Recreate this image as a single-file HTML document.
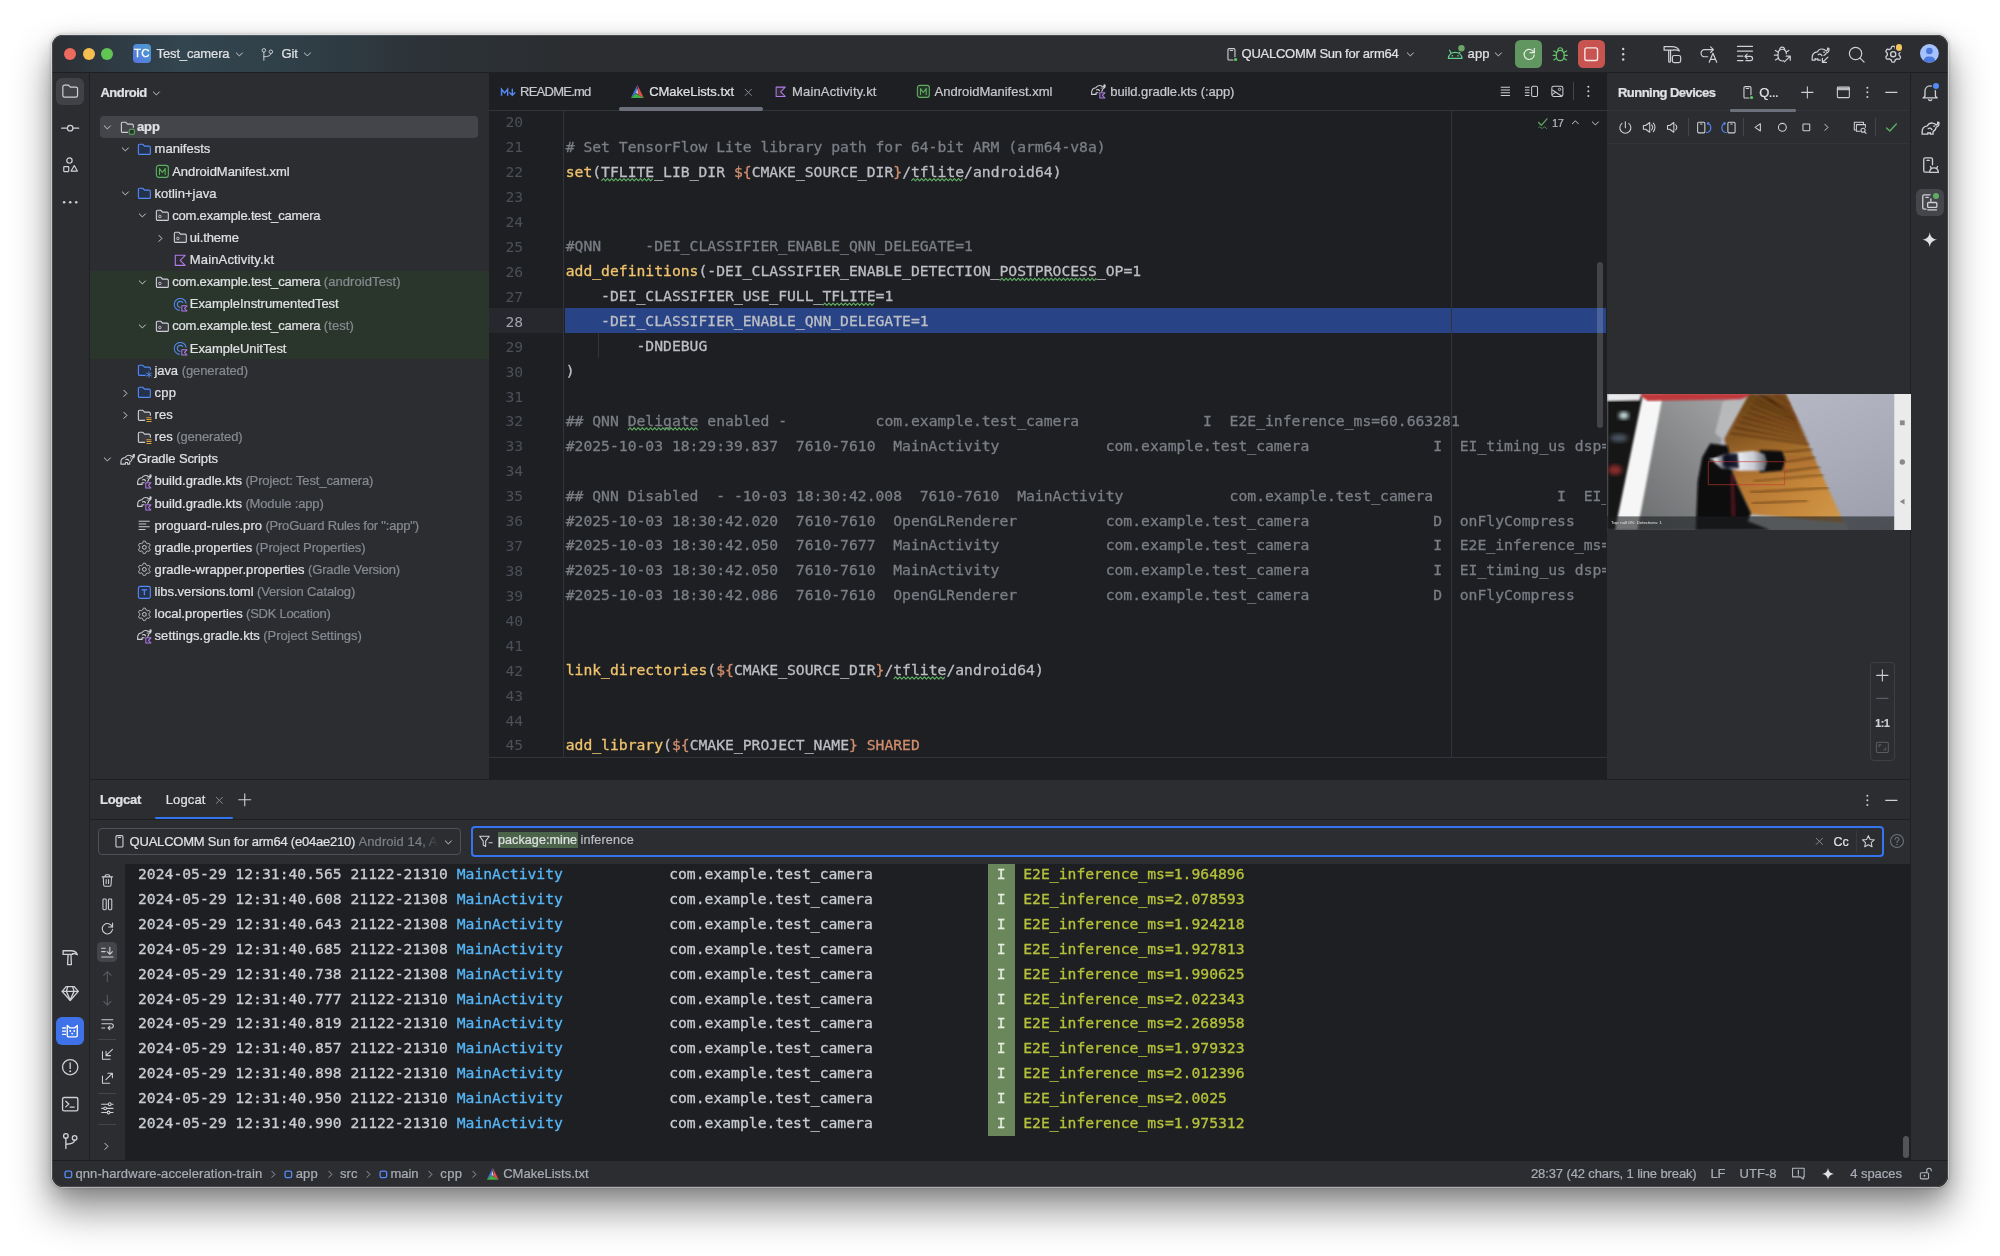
<!DOCTYPE html><html lang="en"><head><meta charset="utf-8"><title>Test_camera – CMakeLists.txt</title><style>
*{box-sizing:border-box;margin:0;padding:0}
html,body{width:2000px;height:1256px;background:#fff;overflow:hidden}
body{position:relative;font-family:"Liberation Sans", "DejaVu Sans", sans-serif;font-size:13px;color:#dfe1e5;-webkit-font-smoothing:antialiased}
#win{will-change:transform;position:absolute;left:52px;top:35px;width:1896px;height:1152px;border-radius:11px;background:#2b2d30;overflow:hidden}
#shadow{position:absolute;left:52px;top:35px;width:1896px;height:1152px;border-radius:11px;box-shadow:0 0 0 0.8px rgba(255,255,255,.55),0 0 3px 0.6px rgba(0,0,0,.22),0 22px 38px 2px rgba(0,0,0,.42),0 6px 18px rgba(0,0,0,.16)}
#rim{position:absolute;left:0;top:0;right:0;bottom:0;border-radius:11px;border:1px solid rgba(255,255,255,.13);pointer-events:none;z-index:50}
.a{position:absolute}
.t{-webkit-text-stroke:0.22px currentColor;position:absolute;white-space:pre;line-height:20px;height:20px;letter-spacing:-0.1px}
.b{font-weight:bold}
.g{color:#868a91}
.m{-webkit-text-stroke:0.3px currentColor;font-family:"DejaVu Sans Mono", "Liberation Mono", monospace;font-size:14.71px;letter-spacing:0;white-space:pre;position:absolute;line-height:25px;height:25px}
.ln{font-family:"DejaVu Sans Mono", "Liberation Mono", monospace;font-size:14.71px;position:absolute;color:#4b5059;text-align:right;width:40px;line-height:25px;height:25px}
svg{position:absolute;overflow:visible}

</style></head><body>
<div id="shadow"></div><div id="win">
<div class="a" style="left:0.00px;top:0.00px;width:1896.00px;height:37.00px;background:#2b2d30;background:linear-gradient(90deg,#2b2f33 0px,#2e3a44 60px,#33454f 130px,#304049 230px,#2c3237 380px,#2b2d30 520px,#2b2d30 100%);"></div>
<div class="a" style="left:0.00px;top:37.00px;width:1896.00px;height:1.00px;background:#1e1f22;"></div>
<div class="a" style="left:0.00px;top:38.00px;width:37.00px;height:1087.00px;background:#2b2d30;"></div>
<div class="a" style="left:37.00px;top:38.00px;width:1.00px;height:1087.00px;background:#1e1f22;"></div>
<div class="a" style="left:38.00px;top:38.00px;width:399.00px;height:706.00px;background:#2b2d30;"></div>
<div class="a" style="left:437.00px;top:38.00px;width:1118.00px;height:707.00px;background:#1e1f22;"></div>
<div class="a" style="left:1555.00px;top:38.00px;width:303.00px;height:707.00px;background:#2b2d30;"></div>
<div class="a" style="left:1858.00px;top:38.00px;width:1.00px;height:1087.00px;background:#1e1f22;"></div>
<div class="a" style="left:1859.00px;top:38.00px;width:37.00px;height:1087.00px;background:#2b2d30;"></div>
<div class="a" style="left:38.00px;top:744.00px;width:1820.00px;height:1.00px;background:#1e1f22;"></div>
<div class="a" style="left:38.00px;top:745.00px;width:1820.00px;height:380.00px;background:#2b2d30;"></div>
<div class="a" style="left:72.60px;top:829.00px;width:1785.40px;height:296.00px;background:#1e1f22;"></div>
<div class="a" style="left:0.00px;top:1125.00px;width:1896.00px;height:1.00px;background:#1e1f22;"></div>
<div class="a" style="left:0.00px;top:1126.00px;width:1896.00px;height:26.00px;background:#2b2d30;"></div>
<div class="a" style="left:12.20px;top:12.70px;width:12px;height:12px;border-radius:6px;background:#ed6a5e"></div>
<div class="a" style="left:30.60px;top:12.70px;width:12px;height:12px;border-radius:6px;background:#f4bf4f"></div>
<div class="a" style="left:49.00px;top:12.70px;width:12px;height:12px;border-radius:6px;background:#61c554"></div>
<div class="a" style="left:80.70px;top:9.40px;width:18.6px;height:18.6px;border-radius:4px;background:linear-gradient(45deg,#5873e0,#4f8ed6 60%,#4f9ad0);color:#fff;font-weight:normal;font-size:11.5px;line-height:18.8px;text-align:center;letter-spacing:0.2px;-webkit-text-stroke:0.3px #fff">TC</div>
<div class="t " style="left:104.60px;top:9.00px;font-size:13px;letter-spacing:-0.147px;">Test_camera</div>
<svg style="left:179.64px;top:12.14px" width="14.72" height="14.72" viewBox="0 0 16 16" fill="none" stroke-width="1.2"><path d="M4.7 6.4 8 9.7l3.3-3.3" stroke="#ced0d6" stroke-linecap="round" stroke-linejoin="round" stroke-width="1.05"/></svg>
<div class="t " style="left:229.60px;top:9.00px;font-size:13px;letter-spacing:-0.175px;">Git</div>
<svg style="left:247.64px;top:12.14px" width="14.72" height="14.72" viewBox="0 0 16 16" fill="none" stroke-width="1.2"><path d="M4.7 6.4 8 9.7l3.3-3.3" stroke="#ced0d6" stroke-linecap="round" stroke-linejoin="round" stroke-width="1.05"/></svg>
<div class="t " style="left:1189.60px;top:9.00px;font-size:13px;letter-spacing:-0.261px;">QUALCOMM Sun for arm64</div>
<svg style="left:1350.64px;top:12.14px" width="14.72" height="14.72" viewBox="0 0 16 16" fill="none" stroke-width="1.2"><path d="M4.7 6.4 8 9.7l3.3-3.3" stroke="#ced0d6" stroke-linecap="round" stroke-linejoin="round" stroke-width="1.05"/></svg>
<div class="t " style="left:1415.50px;top:9.00px;font-size:13px;letter-spacing:0.166px;">app</div>
<svg style="left:1438.94px;top:12.14px" width="14.72" height="14.72" viewBox="0 0 16 16" fill="none" stroke-width="1.2"><path d="M4.7 6.4 8 9.7l3.3-3.3" stroke="#ced0d6" stroke-linecap="round" stroke-linejoin="round" stroke-width="1.05"/></svg>
<div class="a" style="left:1463.00px;top:4.90px;width:27.30px;height:27.80px;background:#629660;border-radius:5.5px"></div>
<div class="a" style="left:1525.70px;top:4.90px;width:27.30px;height:27.80px;background:#c75450;border-radius:5.5px"></div>
<svg style="left:207.94px;top:11.64px" width="14.72" height="14.72" viewBox="0 0 16 16" fill="none" stroke-width="1.2"><circle cx="4.200" cy="3.600" r="1.900" stroke="#ced0d6" stroke-width="1.050"/><circle cx="11.800" cy="5.200" r="1.900" stroke="#ced0d6" stroke-width="1.050"/><path d="M4.200 5.500V14.500M11.800 7.100C11.800 9.700 9 10.300 4.200 10.600" stroke="#ced0d6" stroke-width="1.050" stroke-linecap="round"/></svg>
<svg style="left:1171.94px;top:11.64px" width="14.72" height="14.72" viewBox="0 0 16 16" fill="none" stroke-width="1.2"><rect x="4.3" y="1.8" width="7.6" height="12.4" rx="1.2" stroke="#ced0d6"/><path d="M6.8 3.8h2.6" stroke="#ced0d6" stroke-linecap="round"/><circle cx="12.6" cy="13.6" r="2.6" fill="#2b2d30"/><circle cx="12.6" cy="13.6" r="1.7" fill="#5fcf5f"/></svg>
<svg style="left:1394.10px;top:9.80px" width="18.40" height="18.40" viewBox="0 0 20 20" fill="none" stroke-width="1.2"><path d="M2.6 14.6C2.9 10.6 6 8 10 8s7.1 2.6 7.4 6.6Z" stroke="#63cf8c" stroke-width="1.4" stroke-linejoin="round"/><path d="M5.6 8.8 3.8 5.7M14.4 8.8 16.2 5.7" stroke="#63cf8c" stroke-width="1.3" stroke-linecap="round"/><circle cx="6.9" cy="11.8" r=".9" fill="#63cf8c"/><circle cx="13.1" cy="11.8" r=".9" fill="#63cf8c"/><circle cx="16.8" cy="3.6" r="4.4" fill="#2b2d30"/><circle cx="16.8" cy="3.6" r="3.5" fill="#6aa667"/></svg>
<svg style="left:1467.50px;top:9.80px" width="18.40" height="18.40" viewBox="0 0 20 20" fill="none" stroke-width="1.2"><path d="M15.2 8.4A5.5 5.5 0 1 0 15.5 10.6" stroke="#e6efe4" stroke-width="1.3" stroke-linecap="round"/><path d="M15.6 3.6V8.3H10.9" stroke="#e6efe4" stroke-width="1.3" stroke-linecap="round" stroke-linejoin="round"/></svg>
<svg style="left:1498.80px;top:9.60px" width="18.40" height="18.40" viewBox="0 0 20 20" fill="none" stroke-width="1.2"><path d="M10 5.8c2.6 0 4.3 2.2 4.3 5.6S12.6 17 10 17s-4.3-2.2-4.3-5.6S7.400 5.800 10 5.800Z" stroke="#67c36c" stroke-width="1.3"/><path d="M7.300 6.300C7.300 4.300 8.400 3 10 3s2.700 1.300 2.700 3.300" stroke="#67c36c" stroke-width="1.300"/><path d="M5.700 11.200H2.200M14.300 11.200H17.800M6 8.200 3.100 6.400M14 8.200 16.900 6.400M6.100 14.300 3.100 16.300M13.900 14.300 16.900 16.300" stroke="#67c36c" stroke-width="1.300" stroke-linecap="round"/></svg>
<svg style="left:1530.10px;top:9.80px" width="18.40" height="18.40" viewBox="0 0 20 20" fill="none" stroke-width="1.2"><rect x="3.1" y="3.1" width="13.8" height="13.8" rx="2" stroke="#f7e9e8" stroke-width="1.5"/></svg>
<svg style="left:1561.50px;top:9.60px" width="18.40" height="18.40" viewBox="0 0 20 20" fill="none" stroke-width="1.2"><circle cx="10" cy="4.3" r="1.3" fill="#ced0d6"/><circle cx="10" cy="10" r="1.3" fill="#ced0d6"/><circle cx="10" cy="15.700" r="1.300" fill="#ced0d6"/></svg>
<svg style="left:1610.80px;top:9.60px" width="18.40" height="18.40" viewBox="0 0 20 20" fill="none" stroke-width="1.2"><path d="M1.200 1.800h8.300c4 0 7.300 1.600 8.300 4.700-2.300-1.200-4.300-1.500-6.200-1.200v.300H1.200Z" stroke="#ced0d6" stroke-width="1.3" stroke-linecap="round" stroke-linejoin="round"/><path d="M6.200 5.800v11.900a1 1 0 0 0 2 0V5.800" stroke="#ced0d6" stroke-width="1.3" stroke-linecap="round" stroke-linejoin="round"/><rect x="10.200" y="11.400" width="9" height="7.700" rx="2" stroke="#ced0d6" stroke-width="1.3" stroke-linecap="round" stroke-linejoin="round"/></svg>
<svg style="left:1647.80px;top:9.60px" width="18.40" height="18.40" viewBox="0 0 20 20" fill="none" stroke-width="1.2"><path d="M8.400 12.800H5A3.850 3.850 0 0 1 5 5.100H14.500M11.500 2.100 14.600 5.100 11.500 8.100" stroke="#ced0d6" stroke-width="1.3" stroke-linecap="round" stroke-linejoin="round"/><path d="M10 18.800 14.100 8.900 18.200 18.800M11.500 15.600h5.200" stroke="#ced0d6" stroke-width="1.3" stroke-linecap="round" stroke-linejoin="round"/></svg>
<svg style="left:1684.40px;top:9.60px" width="18.40" height="18.40" viewBox="0 0 20 20" fill="none" stroke-width="1.2"><path d="M1.600 1.500h16.300M1.600 6.700h16.300M1.600 12h6M1.600 16.900h6" stroke="#ced0d6" stroke-width="1.3" stroke-linecap="round" stroke-linejoin="round"/><path d="M9.700 12.300h6a2.300 2.300 0 0 1 0 4.600h-5M12.100 9.900 9.600 12.300 12.100 14.700" stroke="#ced0d6" stroke-width="1.3" stroke-linecap="round" stroke-linejoin="round"/></svg>
<svg style="left:1721.40px;top:9.60px" width="18.40" height="18.40" viewBox="0 0 20 20" fill="none" stroke-width="1.2"><path d="M14.600 9.500C14.400 6.500 12.500 4.600 10 4.600 7.200 4.600 5.400 7 5.400 11s1.900 6.400 4.600 6.400c.6 0 1.100-.1 1.600-.3" stroke="#ced0d6" stroke-width="1.3" stroke-linecap="round" stroke-linejoin="round"/><path d="M7.300 5.500C7.300 3.500 8.400 2.300 10 2.300s2.700 1.200 2.700 3.200" stroke="#ced0d6" stroke-width="1.3" stroke-linecap="round" stroke-linejoin="round"/><path d="M5.400 11H1.500M5.800 7.800 2.600 5.900M5.800 14.300 2.600 16.200M14.300 7.600 17.200 5.900" stroke="#ced0d6" stroke-width="1.3" stroke-linecap="round" stroke-linejoin="round"/><path d="M12.300 18.300 18.600 12.300M14.300 12.100h4.500v4.500" stroke="#ced0d6" stroke-width="1.3" stroke-linecap="round" stroke-linejoin="round"/></svg>
<svg style="left:1758.50px;top:9.60px" width="18.40" height="18.40" viewBox="0 0 20 20" fill="none" stroke-width="1.2"><path d="M14 11.400C15.400 10.700 16.300 9.800 16.500 8.750 18.500 8.250 19.900 6.100 19.500 3.600L18.100 3.400C18.400 5 17.600 6.250 16.400 6.600 15.750 5.400 14.500 4.500 12.750 4.400 10.400 4.100 8.100 5.250 7 7.400 3.500 7.750 1.250 10.400 1.250 13.750V16.500H4.400V14.800C5.400 15.400 6.600 15.400 7.400 14.800V16.500H10.200" stroke="#ced0d6" stroke-width="1.3" stroke-linecap="round" stroke-linejoin="round"/><path d="M7.800 10.500C9.200 9.400 11.200 9.900 11.900 11.600" stroke="#ced0d6" stroke-width="1.3" stroke-linecap="round" stroke-linejoin="round"/><circle cx="14.200" cy="7.800" r=".9" fill="#ced0d6"/><path d="M18.400 13.200 12.600 18.800M12.400 14.600v4.400h4.400" stroke="#ced0d6" stroke-width="1.3" stroke-linecap="round" stroke-linejoin="round"/></svg>
<svg style="left:1794.80px;top:9.60px" width="18.40" height="18.40" viewBox="0 0 20 20" fill="none" stroke-width="1.2"><circle cx="9.300" cy="9.200" r="6.700" stroke="#ced0d6" stroke-width="1.3" stroke-linecap="round" stroke-linejoin="round"/><path d="M14.300 14.300 18.600 18.700" stroke="#ced0d6" stroke-width="1.3" stroke-linecap="round" stroke-linejoin="round"/></svg>
<svg style="left:1831.80px;top:9.70px" width="18.40" height="18.40" viewBox="0 0 20 20" fill="none" stroke-width="1.2"><path d="M16.40 10.00 L16.39 10.42 L16.35 10.84 L16.65 11.32 L17.24 11.94 L17.78 12.64 L17.95 13.29 L17.71 13.80 L17.45 14.30 L17.15 14.78 L16.82 15.24 L16.18 15.42 L15.30 15.30 L14.47 15.10 L13.90 15.08 L13.56 15.32 L13.20 15.54 L12.83 15.74 L12.45 15.91 L12.18 16.42 L11.94 17.24 L11.60 18.06 L11.12 18.53 L10.56 18.58 L10.00 18.60 L9.44 18.58 L8.88 18.53 L8.40 18.06 L8.06 17.24 L7.82 16.42 L7.55 15.91 L7.17 15.74 L6.80 15.54 L6.44 15.32 L6.10 15.08 L5.53 15.10 L4.70 15.30 L3.82 15.42 L3.18 15.24 L2.85 14.78 L2.55 14.30 L2.29 13.80 L2.05 13.29 L2.22 12.64 L2.76 11.94 L3.35 11.32 L3.65 10.84 L3.61 10.42 L3.60 10.00 L3.61 9.58 L3.65 9.16 L3.35 8.68 L2.76 8.06 L2.22 7.36 L2.05 6.71 L2.29 6.20 L2.55 5.70 L2.85 5.22 L3.18 4.76 L3.82 4.58 L4.70 4.70 L5.53 4.90 L6.10 4.92 L6.44 4.68 L6.80 4.46 L7.17 4.26 L7.55 4.09 L7.82 3.58 L8.06 2.76 L8.40 1.94 L8.88 1.47 L9.44 1.42 L10.00 1.40 L10.56 1.42 L11.12 1.47 L11.60 1.94 L11.94 2.76 L12.18 3.58 L12.45 4.09 L12.83 4.26 L13.20 4.46 L13.56 4.68 L13.90 4.92 L14.47 4.90 L15.30 4.70 L16.18 4.58 L16.82 4.76 L17.15 5.22 L17.45 5.70 L17.71 6.20 L17.95 6.71 L17.78 7.36 L17.24 8.06 L16.65 8.68 L16.35 9.16 L16.39 9.58Z" stroke="#ced0d6" stroke-width="1.45" stroke-linecap="round" stroke-linejoin="round"/><circle cx="10" cy="10" r="2.800" stroke="#ced0d6" stroke-width="1.45" stroke-linecap="round" stroke-linejoin="round"/></svg>
<div class="a" style="left:1843.75px;top:9.25px;width:6.7px;height:6.7px;border-radius:50%;background:#f2c55c;box-shadow:0 0 0 1.2px #2b2d30"></div>
<svg style="left:1868.40px;top:9.30px" width="18.8" height="18.8" viewBox="0 0 20 20"><defs><clipPath id="avc"><circle cx="10" cy="10" r="10"/></clipPath></defs><circle cx="10" cy="10" r="10" fill="#a4c2fb"/><g clip-path="url(#avc)" fill="#4d78dc"><circle cx="10" cy="7.4" r="3.5"/><path d="M3.600 20c0-4.500 2-6.600 6.400-6.600s6.400 2.100 6.400 6.600Z"/></g></svg>
<div class="t b" style="left:48.40px;top:47.70px;font-size:13px;letter-spacing:-0.490px;">Android</div>
<svg style="left:96.64px;top:50.94px" width="14.72" height="14.72" viewBox="0 0 16 16" fill="none" stroke-width="1.2"><path d="M4.7 6.4 8 9.7l3.3-3.3" stroke="#ced0d6" stroke-linecap="round" stroke-linejoin="round" stroke-width="1.05"/></svg>
<div class="a" style="left:37.50px;top:235.50px;width:399.50px;height:88.50px;background:#2a362b;"></div>
<div class="a" style="left:48.00px;top:81.00px;width:378.00px;height:22.30px;background:#43454a;border-radius:4px"></div>
<svg style="left:48.14px;top:84.94px" width="14.72" height="14.72" viewBox="0 0 16 16" fill="none" stroke-width="1.2"><path d="M4.7 6.4 8 9.7l3.3-3.3" stroke="#ced0d6" stroke-linecap="round" stroke-linejoin="round" stroke-width="1.05"/></svg>
<svg style="left:67.74px;top:84.84px" width="14.72" height="14.72" viewBox="0 0 16 16" fill="none" stroke-width="1.2"><path d="M8.6 13.5H2.63C2.07 13.5 1.5 12.95 1.5 12.13V3.87C1.5 3.05 2.07 2.5 2.63 2.5H6.33L8.25 4.5H13A1.5 1.5 0 0 1 14.5 6V8.3" stroke="#ced0d6" stroke-linejoin="round"/><rect x="10" y="10" width="5.6" height="5.6" rx="1.5" fill="#253627" stroke="#5fad65" stroke-width="1.1"/></svg>
<div class="t b" style="left:85.00px;top:82.30px;font-size:13px;letter-spacing:-0.108px;">app</div>
<svg style="left:65.74px;top:107.07px" width="14.72" height="14.72" viewBox="0 0 16 16" fill="none" stroke-width="1.2"><path d="M4.7 6.4 8 9.7l3.3-3.3" stroke="#ced0d6" stroke-linecap="round" stroke-linejoin="round" stroke-width="1.05"/></svg>
<svg style="left:85.34px;top:106.97px" width="14.72" height="14.72" viewBox="0 0 16 16" fill="none" stroke-width="1.2"><path d="M8.1 4.35 8.25 4.5H13A1.5 1.5 0 0 1 14.5 6V12.1C14.5 12.95 13.93 13.5 13.37 13.5H2.63C2.07 13.5 1.5 12.95 1.5 12.13V3.87C1.5 3.05 2.07 2.5 2.63 2.5H6.33Z" fill="#25324d" stroke="#548af7"/></svg>
<div class="t " style="left:102.60px;top:104.43px;font-size:13px;letter-spacing:0.018px;">manifests</div>
<svg style="left:102.94px;top:129.10px" width="14.72" height="14.72" viewBox="0 0 16 16" fill="none" stroke-width="1.2"><rect x="1.5" y="1.5" width="13" height="13" rx="2.5" fill="#253627" stroke="#5fad65"/><path d="M4.9 11.3V4.9L8 9.2 11.1 4.9V11.3" stroke="#5fad65" stroke-width="1.15" stroke-linejoin="round" stroke-linecap="round"/></svg>
<div class="t " style="left:120.20px;top:126.56px;font-size:13px;letter-spacing:-0.020px;">AndroidManifest.xml</div>
<svg style="left:65.74px;top:151.33px" width="14.72" height="14.72" viewBox="0 0 16 16" fill="none" stroke-width="1.2"><path d="M4.7 6.4 8 9.7l3.3-3.3" stroke="#ced0d6" stroke-linecap="round" stroke-linejoin="round" stroke-width="1.05"/></svg>
<svg style="left:85.34px;top:151.23px" width="14.72" height="14.72" viewBox="0 0 16 16" fill="none" stroke-width="1.2"><path d="M8.1 4.35 8.25 4.5H13A1.5 1.5 0 0 1 14.5 6V12.1C14.5 12.95 13.93 13.5 13.37 13.5H2.63C2.07 13.5 1.5 12.95 1.5 12.13V3.87C1.5 3.05 2.07 2.5 2.63 2.5H6.33Z" fill="#25324d" stroke="#548af7"/></svg>
<div class="t " style="left:102.60px;top:148.69px;font-size:13px;letter-spacing:0.000px;">kotlin+java</div>
<svg style="left:83.34px;top:173.46px" width="14.72" height="14.72" viewBox="0 0 16 16" fill="none" stroke-width="1.2"><path d="M4.7 6.4 8 9.7l3.3-3.3" stroke="#ced0d6" stroke-linecap="round" stroke-linejoin="round" stroke-width="1.05"/></svg>
<svg style="left:102.94px;top:173.36px" width="14.72" height="14.72" viewBox="0 0 16 16" fill="none" stroke-width="1.2"><path d="M8.1 4.35 8.25 4.5H13A1.5 1.5 0 0 1 14.5 6V12.1C14.5 12.95 13.93 13.5 13.37 13.5H2.63C2.07 13.5 1.5 12.95 1.5 12.13V3.87C1.5 3.05 2.07 2.5 2.63 2.5H6.33Z" fill="#393b40" stroke="#ced0d6"/><circle cx="5.3" cy="9.2" r="1.35" stroke="#ced0d6" stroke-width="0.95"/></svg>
<div class="t " style="left:120.20px;top:170.82px;font-size:13px;letter-spacing:-0.185px;">com.example.test_camera</div>
<svg style="left:100.94px;top:195.59px" width="14.72" height="14.72" viewBox="0 0 16 16" fill="none" stroke-width="1.2"><path d="M6.4 4.7 9.7 8l-3.3 3.3" stroke="#ced0d6" stroke-linecap="round" stroke-linejoin="round" stroke-width="1.05"/></svg>
<svg style="left:120.54px;top:195.49px" width="14.72" height="14.72" viewBox="0 0 16 16" fill="none" stroke-width="1.2"><path d="M8.1 4.35 8.25 4.5H13A1.5 1.5 0 0 1 14.5 6V12.1C14.5 12.95 13.93 13.5 13.37 13.5H2.63C2.07 13.5 1.5 12.95 1.5 12.13V3.87C1.5 3.05 2.07 2.5 2.63 2.5H6.33Z" fill="#393b40" stroke="#ced0d6"/><circle cx="5.3" cy="9.2" r="1.35" stroke="#ced0d6" stroke-width="0.95"/></svg>
<div class="t " style="left:137.80px;top:192.95px;font-size:13px;letter-spacing:-0.109px;">ui.theme</div>
<svg style="left:120.54px;top:217.62px" width="14.72" height="14.72" viewBox="0 0 16 16" fill="none" stroke-width="1.2"><path d="M2.5 2.5H13.2L7.8 8 13.2 13.5H2.5Z" fill="#2f2936" stroke="#b07ce8" stroke-linejoin="round"/></svg>
<div class="t " style="left:137.80px;top:215.08px;font-size:13px;letter-spacing:0.153px;">MainActivity.kt</div>
<svg style="left:83.34px;top:239.85px" width="14.72" height="14.72" viewBox="0 0 16 16" fill="none" stroke-width="1.2"><path d="M4.7 6.4 8 9.7l3.3-3.3" stroke="#ced0d6" stroke-linecap="round" stroke-linejoin="round" stroke-width="1.05"/></svg>
<svg style="left:102.94px;top:239.75px" width="14.72" height="14.72" viewBox="0 0 16 16" fill="none" stroke-width="1.2"><path d="M8.1 4.35 8.25 4.5H13A1.5 1.5 0 0 1 14.5 6V12.1C14.5 12.95 13.93 13.5 13.37 13.5H2.63C2.07 13.5 1.5 12.95 1.5 12.13V3.87C1.5 3.05 2.07 2.5 2.63 2.5H6.33Z" fill="#393b40" stroke="#ced0d6"/><circle cx="5.3" cy="9.2" r="1.35" stroke="#ced0d6" stroke-width="0.95"/></svg>
<div class="t " style="left:120.20px;top:237.21px;font-size:13px;letter-spacing:-0.185px;">com.example.test_camera</div>
<div class="t " style="left:271.80px;top:237.21px;font-size:13px;letter-spacing:0.071px;color:#868a91">(androidTest)</div>
<svg style="left:120.54px;top:261.88px" width="14.72" height="14.72" viewBox="0 0 16 16" fill="none" stroke-width="1.2"><path d="M14.3 7.2A6.5 6.5 0 1 0 7.6 14.5" stroke="#548af7" stroke-width="1.1" fill="none"/><path d="M7.8 1.5A6.5 6.5 0 0 0 7.8 14.5Z" fill="#25324d" opacity=".0"/><path d="M10.6 6A3.3 3.3 0 1 0 7.6 11.3" stroke="#548af7" stroke-width="1.2" stroke-linecap="round"/><path d="M9.6 9.6h5.6l-2.8 2.8 2.8 2.8H9.6Z" fill="#2f2936" stroke="#b07ce8" stroke-width="1.1" stroke-linejoin="round"/></svg>
<div class="t " style="left:137.80px;top:259.34px;font-size:13px;letter-spacing:-0.065px;">ExampleInstrumentedTest</div>
<svg style="left:83.34px;top:284.11px" width="14.72" height="14.72" viewBox="0 0 16 16" fill="none" stroke-width="1.2"><path d="M4.7 6.4 8 9.7l3.3-3.3" stroke="#ced0d6" stroke-linecap="round" stroke-linejoin="round" stroke-width="1.05"/></svg>
<svg style="left:102.94px;top:284.01px" width="14.72" height="14.72" viewBox="0 0 16 16" fill="none" stroke-width="1.2"><path d="M8.1 4.35 8.25 4.5H13A1.5 1.5 0 0 1 14.5 6V12.1C14.5 12.95 13.93 13.5 13.37 13.5H2.63C2.07 13.5 1.5 12.95 1.5 12.13V3.87C1.5 3.05 2.07 2.5 2.63 2.5H6.33Z" fill="#393b40" stroke="#ced0d6"/><circle cx="5.3" cy="9.2" r="1.35" stroke="#ced0d6" stroke-width="0.95"/></svg>
<div class="t " style="left:120.20px;top:281.47px;font-size:13px;letter-spacing:-0.185px;">com.example.test_camera</div>
<div class="t " style="left:271.80px;top:281.47px;font-size:13px;letter-spacing:0.096px;color:#868a91">(test)</div>
<svg style="left:120.54px;top:306.14px" width="14.72" height="14.72" viewBox="0 0 16 16" fill="none" stroke-width="1.2"><path d="M14.3 7.2A6.5 6.5 0 1 0 7.6 14.5" stroke="#548af7" stroke-width="1.1" fill="none"/><path d="M7.8 1.5A6.5 6.5 0 0 0 7.8 14.5Z" fill="#25324d" opacity=".0"/><path d="M10.6 6A3.3 3.3 0 1 0 7.6 11.3" stroke="#548af7" stroke-width="1.2" stroke-linecap="round"/><path d="M9.6 9.6h5.6l-2.8 2.8 2.8 2.8H9.6Z" fill="#2f2936" stroke="#b07ce8" stroke-width="1.1" stroke-linejoin="round"/></svg>
<div class="t " style="left:137.80px;top:303.60px;font-size:13px;letter-spacing:-0.063px;">ExampleUnitTest</div>
<svg style="left:85.34px;top:328.27px" width="14.72" height="14.72" viewBox="0 0 16 16" fill="none" stroke-width="1.2"><path d="M9.5 13.5H2.63C2.07 13.5 1.5 12.95 1.5 12.13V3.87C1.5 3.05 2.07 2.5 2.63 2.5H6.33L8.25 4.5H13A1.5 1.5 0 0 1 14.5 6V8" fill="#25324d" stroke="#548af7" stroke-linejoin="round"/><path d="M13 9.6v6M10.4 11.1l5.2 3M15.6 11.1l-5.2 3" stroke="#548af7" stroke-width="1" stroke-linecap="round"/></svg>
<div class="t " style="left:102.60px;top:325.73px;font-size:13px;letter-spacing:-0.115px;">java</div>
<div class="t " style="left:129.70px;top:325.73px;font-size:13px;letter-spacing:-0.084px;color:#868a91">(generated)</div>
<svg style="left:65.74px;top:350.50px" width="14.72" height="14.72" viewBox="0 0 16 16" fill="none" stroke-width="1.2"><path d="M6.4 4.7 9.7 8l-3.3 3.3" stroke="#ced0d6" stroke-linecap="round" stroke-linejoin="round" stroke-width="1.05"/></svg>
<svg style="left:85.34px;top:350.40px" width="14.72" height="14.72" viewBox="0 0 16 16" fill="none" stroke-width="1.2"><path d="M8.1 4.35 8.25 4.5H13A1.5 1.5 0 0 1 14.5 6V12.1C14.5 12.95 13.93 13.5 13.37 13.5H2.63C2.07 13.5 1.5 12.95 1.5 12.13V3.87C1.5 3.05 2.07 2.5 2.63 2.5H6.33Z" fill="#25324d" stroke="#548af7"/></svg>
<div class="t " style="left:102.60px;top:347.86px;font-size:13px;letter-spacing:0.210px;">cpp</div>
<svg style="left:65.74px;top:372.63px" width="14.72" height="14.72" viewBox="0 0 16 16" fill="none" stroke-width="1.2"><path d="M6.4 4.7 9.7 8l-3.3 3.3" stroke="#ced0d6" stroke-linecap="round" stroke-linejoin="round" stroke-width="1.05"/></svg>
<svg style="left:85.34px;top:372.53px" width="14.72" height="14.72" viewBox="0 0 16 16" fill="none" stroke-width="1.2"><path d="M8.8 13.5H2.63C2.07 13.5 1.5 12.95 1.5 12.13V3.87C1.5 3.05 2.07 2.5 2.63 2.5H6.33L8.25 4.5H13A1.5 1.5 0 0 1 14.5 6V8.3" fill="#393b40" stroke="#ced0d6" stroke-linejoin="round"/><path d="M10.2 10.6h5.6M10.2 12.6h5.6M10.2 14.6h5.6" stroke="#d9a343" stroke-width="1.15"/></svg>
<div class="t " style="left:102.60px;top:369.99px;font-size:13px;letter-spacing:0.013px;">res</div>
<svg style="left:85.34px;top:394.66px" width="14.72" height="14.72" viewBox="0 0 16 16" fill="none" stroke-width="1.2"><path d="M8.8 13.5H2.63C2.07 13.5 1.5 12.95 1.5 12.13V3.87C1.5 3.05 2.07 2.5 2.63 2.5H6.33L8.25 4.5H13A1.5 1.5 0 0 1 14.5 6V8.3" fill="#393b40" stroke="#ced0d6" stroke-linejoin="round"/><path d="M10.2 10.6h5.6M10.2 12.6h5.6M10.2 14.6h5.6" stroke="#d9a343" stroke-width="1.15"/></svg>
<div class="t " style="left:102.60px;top:392.12px;font-size:13px;letter-spacing:0.013px;">res</div>
<div class="t " style="left:124.20px;top:392.12px;font-size:13px;letter-spacing:-0.074px;color:#868a91">(generated)</div>
<svg style="left:48.14px;top:416.89px" width="14.72" height="14.72" viewBox="0 0 16 16" fill="none" stroke-width="1.2"><path d="M4.7 6.4 8 9.7l3.3-3.3" stroke="#ced0d6" stroke-linecap="round" stroke-linejoin="round" stroke-width="1.05"/></svg>
<svg style="left:67.74px;top:416.79px" width="14.72" height="14.72" viewBox="0 0 16 16" fill="none" stroke-width="1.2"><path d="M1 13.2V11C1 8.3 2.8 6.2 5.6 5.9 6.5 4.2 8.3 3.3 10.2 3.5 11.6 3.6 12.6 4.3 13.1 5.3 14.1 5 14.7 4 14.5 2.7L15.6 2.9C15.9 4.9 14.8 6.6 13.2 7 13 8.8 12 10.3 10.5 10.9V13.2H8.2V11.4H5.8V13.2Z" stroke="#ced0d6" stroke-linejoin="round"/><path d="M6.3 8.4C7.4 7.5 9 7.9 9.5 9.3" stroke="#ced0d6" stroke-linecap="round"/><circle cx="11.4" cy="6.3" r=".7" fill="#ced0d6"/></svg>
<div class="t " style="left:85.00px;top:414.25px;font-size:13px;letter-spacing:-0.105px;">Gradle Scripts</div>
<svg style="left:85.34px;top:438.92px" width="14.72" height="14.72" viewBox="0 0 16 16" fill="none" stroke-width="1.2"><g transform="translate(-0.3,-1.9)"><path d="M11.9 9.8C12.7 9.1 13.1 8.1 13.2 7 14.8 6.6 15.9 4.9 15.6 2.9L14.5 2.7C14.7 4 14.1 5 13.1 5.3 12.6 4.3 11.6 3.6 10.2 3.5 8.3 3.3 6.5 4.2 5.6 5.9 2.8 6.2 1 8.3 1 11V13.2H5.8V11.4H8" stroke="#ced0d6" stroke-linejoin="round" stroke-linecap="round"/><path d="M6.3 8.4C7.4 7.5 9 7.9 9.5 9.3" stroke="#ced0d6" stroke-linecap="round"/><circle cx="11.4" cy="6.3" r=".7" fill="#ced0d6"/></g><path d="M9.6 9.6h5.6l-2.8 2.8 2.8 2.8H9.6Z" fill="#2f2936" stroke="#b07ce8" stroke-width="1.1" stroke-linejoin="round"/></svg>
<div class="t " style="left:102.60px;top:436.38px;font-size:13px;letter-spacing:-0.003px;">build.gradle.kts</div>
<div class="t " style="left:193.40px;top:436.38px;font-size:13px;letter-spacing:-0.120px;color:#868a91">(Project: Test_camera)</div>
<svg style="left:85.34px;top:461.05px" width="14.72" height="14.72" viewBox="0 0 16 16" fill="none" stroke-width="1.2"><g transform="translate(-0.3,-1.9)"><path d="M11.9 9.8C12.7 9.1 13.1 8.1 13.2 7 14.8 6.6 15.9 4.9 15.6 2.9L14.5 2.7C14.7 4 14.1 5 13.1 5.3 12.6 4.3 11.6 3.6 10.2 3.5 8.3 3.3 6.5 4.2 5.6 5.9 2.8 6.2 1 8.3 1 11V13.2H5.8V11.4H8" stroke="#ced0d6" stroke-linejoin="round" stroke-linecap="round"/><path d="M6.3 8.4C7.4 7.5 9 7.9 9.5 9.3" stroke="#ced0d6" stroke-linecap="round"/><circle cx="11.4" cy="6.3" r=".7" fill="#ced0d6"/></g><path d="M9.6 9.6h5.6l-2.8 2.8 2.8 2.8H9.6Z" fill="#2f2936" stroke="#b07ce8" stroke-width="1.1" stroke-linejoin="round"/></svg>
<div class="t " style="left:102.60px;top:458.51px;font-size:13px;letter-spacing:-0.003px;">build.gradle.kts</div>
<div class="t " style="left:193.40px;top:458.51px;font-size:13px;letter-spacing:-0.155px;color:#868a91">(Module :app)</div>
<svg style="left:85.34px;top:483.18px" width="14.72" height="14.72" viewBox="0 0 16 16" fill="none" stroke-width="1.2"><path d="M1.8 3.5h12M1.8 6.5h8.4M1.8 9.5h12M1.8 12.5h7.4" stroke="#ced0d6" stroke-width="1.05"/></svg>
<div class="t " style="left:102.60px;top:480.64px;font-size:13px;letter-spacing:0.025px;">proguard-rules.pro</div>
<div class="t " style="left:213.40px;top:480.64px;font-size:13px;letter-spacing:-0.200px;color:#868a91">(ProGuard Rules for ":app")</div>
<svg style="left:85.34px;top:505.31px" width="14.72" height="14.72" viewBox="0 0 16 16" fill="none" stroke-width="1.2"><path d="M13.05 8.00 L13.04 8.33 L13.01 8.66 L13.24 9.04 L13.70 9.53 L14.11 10.07 L14.24 10.58 L14.05 10.99 L13.85 11.38 L13.61 11.75 L13.36 12.11 L12.85 12.25 L12.17 12.17 L11.53 12.02 L11.07 12.01 L10.81 12.20 L10.53 12.37 L10.23 12.53 L9.93 12.67 L9.72 13.06 L9.53 13.70 L9.26 14.33 L8.88 14.69 L8.44 14.74 L8.00 14.75 L7.56 14.74 L7.12 14.69 L6.74 14.33 L6.47 13.70 L6.28 13.06 L6.07 12.67 L5.77 12.53 L5.48 12.37 L5.19 12.20 L4.93 12.01 L4.47 12.02 L3.83 12.17 L3.15 12.25 L2.64 12.11 L2.39 11.75 L2.15 11.38 L1.95 10.99 L1.76 10.58 L1.89 10.07 L2.30 9.53 L2.76 9.04 L2.99 8.66 L2.96 8.33 L2.95 8.00 L2.96 7.67 L2.99 7.34 L2.76 6.96 L2.30 6.47 L1.89 5.93 L1.76 5.42 L1.95 5.01 L2.15 4.63 L2.39 4.25 L2.64 3.89 L3.15 3.75 L3.83 3.83 L4.47 3.98 L4.93 3.99 L5.19 3.80 L5.47 3.63 L5.77 3.47 L6.07 3.33 L6.28 2.94 L6.47 2.30 L6.74 1.67 L7.12 1.31 L7.56 1.26 L8.00 1.25 L8.44 1.26 L8.88 1.31 L9.26 1.67 L9.53 2.30 L9.72 2.94 L9.93 3.33 L10.23 3.47 L10.53 3.63 L10.81 3.80 L11.07 3.99 L11.53 3.98 L12.17 3.83 L12.85 3.75 L13.36 3.89 L13.61 4.25 L13.85 4.62 L14.05 5.01 L14.24 5.42 L14.11 5.93 L13.70 6.47 L13.24 6.96 L13.01 7.34 L13.04 7.67Z" stroke="#ced0d6" stroke-linejoin="round" stroke-width="1.050"/><circle cx="8" cy="8" r="2.100" stroke="#ced0d6" stroke-width="1.050"/></svg>
<div class="t " style="left:102.60px;top:502.77px;font-size:13px;letter-spacing:0.002px;">gradle.properties</div>
<div class="t " style="left:203.60px;top:502.77px;font-size:13px;letter-spacing:-0.104px;color:#868a91">(Project Properties)</div>
<svg style="left:85.34px;top:527.44px" width="14.72" height="14.72" viewBox="0 0 16 16" fill="none" stroke-width="1.2"><path d="M13.05 8.00 L13.04 8.33 L13.01 8.66 L13.24 9.04 L13.70 9.53 L14.11 10.07 L14.24 10.58 L14.05 10.99 L13.85 11.38 L13.61 11.75 L13.36 12.11 L12.85 12.25 L12.17 12.17 L11.53 12.02 L11.07 12.01 L10.81 12.20 L10.53 12.37 L10.23 12.53 L9.93 12.67 L9.72 13.06 L9.53 13.70 L9.26 14.33 L8.88 14.69 L8.44 14.74 L8.00 14.75 L7.56 14.74 L7.12 14.69 L6.74 14.33 L6.47 13.70 L6.28 13.06 L6.07 12.67 L5.77 12.53 L5.48 12.37 L5.19 12.20 L4.93 12.01 L4.47 12.02 L3.83 12.17 L3.15 12.25 L2.64 12.11 L2.39 11.75 L2.15 11.38 L1.95 10.99 L1.76 10.58 L1.89 10.07 L2.30 9.53 L2.76 9.04 L2.99 8.66 L2.96 8.33 L2.95 8.00 L2.96 7.67 L2.99 7.34 L2.76 6.96 L2.30 6.47 L1.89 5.93 L1.76 5.42 L1.95 5.01 L2.15 4.63 L2.39 4.25 L2.64 3.89 L3.15 3.75 L3.83 3.83 L4.47 3.98 L4.93 3.99 L5.19 3.80 L5.47 3.63 L5.77 3.47 L6.07 3.33 L6.28 2.94 L6.47 2.30 L6.74 1.67 L7.12 1.31 L7.56 1.26 L8.00 1.25 L8.44 1.26 L8.88 1.31 L9.26 1.67 L9.53 2.30 L9.72 2.94 L9.93 3.33 L10.23 3.47 L10.53 3.63 L10.81 3.80 L11.07 3.99 L11.53 3.98 L12.17 3.83 L12.85 3.75 L13.36 3.89 L13.61 4.25 L13.85 4.62 L14.05 5.01 L14.24 5.42 L14.11 5.93 L13.70 6.47 L13.24 6.96 L13.01 7.34 L13.04 7.67Z" stroke="#ced0d6" stroke-linejoin="round" stroke-width="1.050"/><circle cx="8" cy="8" r="2.100" stroke="#ced0d6" stroke-width="1.050"/></svg>
<div class="t " style="left:102.60px;top:524.90px;font-size:13px;letter-spacing:0.078px;">gradle-wrapper.properties</div>
<div class="t " style="left:256.10px;top:524.90px;font-size:13px;letter-spacing:-0.179px;color:#868a91">(Gradle Version)</div>
<svg style="left:85.34px;top:549.57px" width="14.72" height="14.72" viewBox="0 0 16 16" fill="none" stroke-width="1.2"><rect x="1.5" y="1.5" width="13" height="13" rx="2" fill="#25324d" stroke="#548af7"/><path d="M5 5.2h6M8 5.2v6" stroke="#548af7" stroke-width="1.3"/></svg>
<div class="t " style="left:102.60px;top:547.03px;font-size:13px;letter-spacing:-0.045px;">libs.versions.toml</div>
<div class="t " style="left:205.00px;top:547.03px;font-size:13px;letter-spacing:-0.138px;color:#868a91">(Version Catalog)</div>
<svg style="left:85.34px;top:571.70px" width="14.72" height="14.72" viewBox="0 0 16 16" fill="none" stroke-width="1.2"><path d="M13.05 8.00 L13.04 8.33 L13.01 8.66 L13.24 9.04 L13.70 9.53 L14.11 10.07 L14.24 10.58 L14.05 10.99 L13.85 11.38 L13.61 11.75 L13.36 12.11 L12.85 12.25 L12.17 12.17 L11.53 12.02 L11.07 12.01 L10.81 12.20 L10.53 12.37 L10.23 12.53 L9.93 12.67 L9.72 13.06 L9.53 13.70 L9.26 14.33 L8.88 14.69 L8.44 14.74 L8.00 14.75 L7.56 14.74 L7.12 14.69 L6.74 14.33 L6.47 13.70 L6.28 13.06 L6.07 12.67 L5.77 12.53 L5.48 12.37 L5.19 12.20 L4.93 12.01 L4.47 12.02 L3.83 12.17 L3.15 12.25 L2.64 12.11 L2.39 11.75 L2.15 11.38 L1.95 10.99 L1.76 10.58 L1.89 10.07 L2.30 9.53 L2.76 9.04 L2.99 8.66 L2.96 8.33 L2.95 8.00 L2.96 7.67 L2.99 7.34 L2.76 6.96 L2.30 6.47 L1.89 5.93 L1.76 5.42 L1.95 5.01 L2.15 4.63 L2.39 4.25 L2.64 3.89 L3.15 3.75 L3.83 3.83 L4.47 3.98 L4.93 3.99 L5.19 3.80 L5.47 3.63 L5.77 3.47 L6.07 3.33 L6.28 2.94 L6.47 2.30 L6.74 1.67 L7.12 1.31 L7.56 1.26 L8.00 1.25 L8.44 1.26 L8.88 1.31 L9.26 1.67 L9.53 2.30 L9.72 2.94 L9.93 3.33 L10.23 3.47 L10.53 3.63 L10.81 3.80 L11.07 3.99 L11.53 3.98 L12.17 3.83 L12.85 3.75 L13.36 3.89 L13.61 4.25 L13.85 4.62 L14.05 5.01 L14.24 5.42 L14.11 5.93 L13.70 6.47 L13.24 6.96 L13.01 7.34 L13.04 7.67Z" stroke="#ced0d6" stroke-linejoin="round" stroke-width="1.050"/><circle cx="8" cy="8" r="2.100" stroke="#ced0d6" stroke-width="1.050"/></svg>
<div class="t " style="left:102.60px;top:569.16px;font-size:13px;letter-spacing:-0.004px;">local.properties</div>
<div class="t " style="left:194.10px;top:569.16px;font-size:13px;letter-spacing:-0.268px;color:#868a91">(SDK Location)</div>
<svg style="left:85.34px;top:593.83px" width="14.72" height="14.72" viewBox="0 0 16 16" fill="none" stroke-width="1.2"><g transform="translate(-0.3,-1.9)"><path d="M11.9 9.8C12.7 9.1 13.1 8.1 13.2 7 14.8 6.6 15.9 4.9 15.6 2.9L14.5 2.7C14.7 4 14.1 5 13.1 5.3 12.6 4.3 11.6 3.6 10.2 3.5 8.3 3.3 6.5 4.2 5.6 5.9 2.8 6.2 1 8.3 1 11V13.2H5.8V11.4H8" stroke="#ced0d6" stroke-linejoin="round" stroke-linecap="round"/><path d="M6.3 8.4C7.4 7.5 9 7.9 9.5 9.3" stroke="#ced0d6" stroke-linecap="round"/><circle cx="11.4" cy="6.3" r=".7" fill="#ced0d6"/></g><path d="M9.6 9.6h5.6l-2.8 2.8 2.8 2.8H9.6Z" fill="#2f2936" stroke="#b07ce8" stroke-width="1.1" stroke-linejoin="round"/></svg>
<div class="t " style="left:102.60px;top:591.29px;font-size:13px;letter-spacing:0.027px;">settings.gradle.kts</div>
<div class="t " style="left:211.30px;top:591.29px;font-size:13px;letter-spacing:-0.072px;color:#868a91">(Project Settings)</div>
<div class="a" style="left:4.20px;top:42.70px;width:28.00px;height:27.60px;background:#404247;border-radius:6px"></div>
<svg style="left:9.00px;top:47.10px" width="18.40" height="18.40" viewBox="0 0 20 20" fill="none" stroke-width="1.2"><path d="M10.2 5.5 8.2 3.5H3.8A1.8 1.8 0 0 0 2 5.3V14.7A1.8 1.8 0 0 0 3.8 16.5H16.2A1.8 1.8 0 0 0 18 14.7V7.3A1.8 1.8 0 0 0 16.2 5.5Z" stroke="#ced0d6" stroke-width="1.3" stroke-linejoin="round"/></svg>
<svg style="left:9.00px;top:84.10px" width="18.40" height="18.40" viewBox="0 0 20 20" fill="none" stroke-width="1.2"><circle cx="10" cy="10" r="3" stroke="#ced0d6" stroke-width="1.3"/><path d="M.7 10h6.3M13 10h6.3" stroke="#ced0d6" stroke-width="1.3" stroke-linecap="round"/></svg>
<svg style="left:9.00px;top:121.30px" width="18.40" height="18.40" viewBox="0 0 20 20" fill="none" stroke-width="1.2"><circle cx="9.2" cy="5" r="2.9" stroke="#ced0d6" stroke-width="1.3"/><rect x="3" y="11.6" width="5.4" height="5.4" rx=".6" stroke="#ced0d6" stroke-width="1.3"/><path d="M14.4 10.4 17.8 16.4H11Z" stroke="#ced0d6" stroke-width="1.3" stroke-linejoin="round"/></svg>
<svg style="left:9.00px;top:158.10px" width="18.40" height="18.40" viewBox="0 0 20 20" fill="none" stroke-width="1.2"><circle cx="3.4" cy="10" r="1.4" fill="#ced0d6"/><circle cx="10" cy="10" r="1.4" fill="#ced0d6"/><circle cx="16.6" cy="10" r="1.4" fill="#ced0d6"/></svg>
<div class="a" style="left:437.00px;top:75.00px;width:1118.00px;height:1.00px;background:#313438;"></div>
<div class="a" style="left:566.90px;top:72.30px;width:144.10px;height:3.40px;background:#6c707a;border-radius:1.7px"></div>
<div class="t " style="left:468.00px;top:47.00px;font-size:13px;letter-spacing:-0.744px;color:#c6c8ce">README.md</div>
<div class="t " style="left:597.20px;top:47.00px;font-size:13px;letter-spacing:-0.025px;">CMakeLists.txt</div>
<div class="t " style="left:740.00px;top:47.00px;font-size:13px;letter-spacing:0.166px;color:#c6c8ce">MainActivity.kt</div>
<div class="t " style="left:882.60px;top:47.00px;font-size:13px;letter-spacing:0.001px;color:#c6c8ce">AndroidManifest.xml</div>
<div class="t " style="left:1058.20px;top:47.00px;font-size:13px;letter-spacing:-0.035px;color:#c6c8ce">build.gradle.kts (:app)</div>
<svg style="left:448.84px;top:49.94px" width="14.72" height="14.72" viewBox="0 0 16 16" fill="none" stroke-width="1.2"><path d="M0.600 11.700V4.600L3.900 8.600 7.200 4.600V11.700" stroke="#548af7" stroke-width="1.600" stroke-linejoin="miter"/><path d="M12.300 4.600V11M9.600 8.500 12.300 11.300 15 8.500" stroke="#548af7" stroke-width="1.500" stroke-linecap="round" stroke-linejoin="round"/></svg>
<svg style="left:578.14px;top:49.44px" width="14.72" height="14.72" viewBox="0 0 16 16" fill="none" stroke-width="1.2"><path d="M8 0.900 0.900 15.100 7.300 9.400Z" fill="#3f6fd9"/><path d="M8 0.900 15.100 15.100 8.700 11.700 9 7Z" fill="#e04d4d"/><path d="M0.900 15.100 15.100 15.100 8.200 11.400 6.400 10.200Z" fill="#3fae45"/><path d="M8 4.500 8.900 10.800 6.500 9.700Z" fill="#d8dadf"/></svg>
<svg style="left:688.64px;top:49.64px" width="14.72" height="14.72" viewBox="0 0 16 16" fill="none" stroke-width="1.2"><path d="M4.600 4.600 11.400 11.400M11.400 4.600 4.600 11.400" stroke="#868a91" stroke-width="1.050" stroke-linecap="round"/></svg>
<svg style="left:721.60px;top:50.00px" width="13.60" height="13.60" viewBox="0 0 16 16" fill="none" stroke-width="1.2"><path d="M2.5 2.5H13.2L7.8 8 13.2 13.5H2.5Z" fill="#2f2936" stroke="#b07ce8" stroke-linejoin="round"/></svg>
<svg style="left:863.64px;top:49.44px" width="14.72" height="14.72" viewBox="0 0 16 16" fill="none" stroke-width="1.2"><rect x="1.5" y="1.5" width="13" height="13" rx="2.5" fill="#253627" stroke="#5fad65"/><path d="M4.9 11.3V4.9L8 9.2 11.1 4.9V11.3" stroke="#5fad65" stroke-width="1.15" stroke-linejoin="round" stroke-linecap="round"/></svg>
<svg style="left:1039.14px;top:49.44px" width="14.72" height="14.72" viewBox="0 0 16 16" fill="none" stroke-width="1.2"><g transform="translate(-0.3,-1.9)"><path d="M11.9 9.8C12.7 9.1 13.1 8.1 13.2 7 14.8 6.6 15.9 4.9 15.6 2.9L14.5 2.7C14.7 4 14.1 5 13.1 5.3 12.6 4.3 11.6 3.6 10.2 3.5 8.3 3.3 6.5 4.2 5.6 5.9 2.8 6.2 1 8.3 1 11V13.2H5.8V11.4H8" stroke="#ced0d6" stroke-linejoin="round" stroke-linecap="round"/><path d="M6.3 8.4C7.4 7.5 9 7.9 9.5 9.3" stroke="#ced0d6" stroke-linecap="round"/><circle cx="11.4" cy="6.3" r=".7" fill="#ced0d6"/></g><path d="M9.6 9.6h5.6l-2.8 2.8 2.8 2.8H9.6Z" fill="#2f2936" stroke="#b07ce8" stroke-width="1.1" stroke-linejoin="round"/></svg>
<svg style="left:1446.14px;top:49.34px" width="14.72" height="14.72" viewBox="0 0 16 16" fill="none" stroke-width="1.2"><path d="M3 3.500h10M3 6.500h10M3 9.500h10M3 12.500h10" stroke="#ced0d6" stroke-width="1.100"/></svg>
<svg style="left:1472.14px;top:49.34px" width="14.72" height="14.72" viewBox="0 0 16 16" fill="none" stroke-width="1.2"><path d="M1 3.500h5M1 6.500h5M1 9.500h5M1 12.500h5" stroke="#ced0d6" stroke-width="1.100"/><rect x="8.300" y="2.500" width="6.400" height="11" rx="1.500" stroke="#ced0d6" stroke-width="1.100"/></svg>
<svg style="left:1497.84px;top:49.34px" width="14.72" height="14.72" viewBox="0 0 16 16" fill="none" stroke-width="1.2"><rect x="2" y="2.500" width="12" height="11" rx="1.800" stroke="#ced0d6" stroke-width="1.100"/><path d="M2.500 6.500 13 13.300M2.300 11.500 6.300 8.800" stroke="#ced0d6" stroke-width="1.100"/><circle cx="10.400" cy="5.900" r="1.300" stroke="#ced0d6" stroke-width="1"/></svg>
<div class="a" style="left:1520.80px;top:47.40px;width:1.00px;height:18.00px;background:#43454a;"></div>
<svg style="left:1529.14px;top:49.34px" width="14.72" height="14.72" viewBox="0 0 16 16" fill="none" stroke-width="1.2"><circle cx="8" cy="3" r="1.100" fill="#ced0d6"/><circle cx="8" cy="8" r="1.100" fill="#ced0d6"/><circle cx="8" cy="13" r="1.100" fill="#ced0d6"/></svg>
<div class="a" style="left:437px;top:76px;width:1117px;height:646.5px;overflow:hidden;">
<div class="a" style="left:0;top:197.20px;width:74.5px;height:24.92px;background:#26282e"></div>
<div class="a" style="left:76.29999999999995px;top:197.20px;width:1100px;height:24.92px;background:#284386"></div>
<div class="a" style="left:74.29999999999995px;top:0;width:1px;height:647px;background:#313438"></div>
<div class="a" style="left:961.8px;top:0;width:1px;height:647px;background:#313438"></div>
<div class="a" style="left:109.29999999999995px;top:222.12px;width:1px;height:24.92px;background:#313438"></div>
<div class="ln" style="left:-5.80px;top:-1.56px;color:#4b5059">20</div>
<div class="ln" style="left:-5.80px;top:23.36px;color:#4b5059">21</div>
<div class="m" style="left:76.70px;top:22.76px;color:#bcbec4"><span style="color:#7a7e85"># Set TensorFlow Lite library path for 64-bit ARM (arm64-v8a)</span></div>
<div class="ln" style="left:-5.80px;top:48.28px;color:#4b5059">22</div>
<div class="m" style="left:76.70px;top:47.68px;color:#bcbec4"><span style="color:#f0c36e">set</span>(<span class="sq">TFLITE</span>_LIB_DIR <span style="color:#cf8e6d">${</span>CMAKE_SOURCE_DIR<span style="color:#cf8e6d">}</span>/<span class="sq">tflite</span>/android64)</div>
<div class="ln" style="left:-5.80px;top:73.20px;color:#4b5059">23</div>
<div class="ln" style="left:-5.80px;top:98.12px;color:#4b5059">24</div>
<div class="ln" style="left:-5.80px;top:123.04px;color:#4b5059">25</div>
<div class="m" style="left:76.70px;top:122.44px;color:#bcbec4"><span style="color:#7a7e85">#QNN     -DEI_CLASSIFIER_ENABLE_QNN_DELEGATE=1</span></div>
<div class="ln" style="left:-5.80px;top:147.96px;color:#4b5059">26</div>
<div class="m" style="left:76.70px;top:147.36px;color:#bcbec4"><span style="color:#f0c36e">add_definitions</span>(-DEI_CLASSIFIER_ENABLE_DETECTION_<span class="sq">POSTPROCESS</span>_OP=1</div>
<div class="ln" style="left:-5.80px;top:172.88px;color:#4b5059">27</div>
<div class="m" style="left:76.70px;top:172.28px;color:#bcbec4">    -DEI_CLASSIFIER_USE_FULL_<span class="sq">TFLITE</span>=1</div>
<div class="ln" style="left:-5.80px;top:197.80px;color:#a1a3ab">28</div>
<div class="m" style="left:76.70px;top:197.20px;color:#bcbec4">    -DEI_CLASSIFIER_ENABLE_QNN_DELEGATE=1</div>
<div class="ln" style="left:-5.80px;top:222.72px;color:#4b5059">29</div>
<div class="m" style="left:76.70px;top:222.12px;color:#bcbec4">        -DNDEBUG</div>
<div class="ln" style="left:-5.80px;top:247.64px;color:#4b5059">30</div>
<div class="m" style="left:76.70px;top:247.04px;color:#bcbec4">)</div>
<div class="ln" style="left:-5.80px;top:272.56px;color:#4b5059">31</div>
<div class="ln" style="left:-5.80px;top:297.48px;color:#4b5059">32</div>
<div class="m" style="left:76.70px;top:296.88px;color:#bcbec4"><span style="color:#7a7e85">## QNN <span class="sq">Deligate</span> enabled -          com.example.test_camera              I  E2E_inference_ms=60.663281</span></div>
<div class="ln" style="left:-5.80px;top:322.40px;color:#4b5059">33</div>
<div class="m" style="left:76.70px;top:321.80px;color:#bcbec4"><span style="color:#7a7e85">#2025-10-03 18:29:39.837  7610-7610  MainActivity            com.example.test_camera              I  EI_timing_us dsp=0</span></div>
<div class="ln" style="left:-5.80px;top:347.32px;color:#4b5059">34</div>
<div class="ln" style="left:-5.80px;top:372.24px;color:#4b5059">35</div>
<div class="m" style="left:76.70px;top:371.64px;color:#bcbec4"><span style="color:#7a7e85">## QNN Disabled  - -10-03 18:30:42.008  7610-7610  MainActivity            com.example.test_camera              I  EI_timing_us</span></div>
<div class="ln" style="left:-5.80px;top:397.16px;color:#4b5059">36</div>
<div class="m" style="left:76.70px;top:396.56px;color:#bcbec4"><span style="color:#7a7e85">#2025-10-03 18:30:42.020  7610-7610  OpenGLRenderer          com.example.test_camera              D  onFlyCompress</span></div>
<div class="ln" style="left:-5.80px;top:422.08px;color:#4b5059">37</div>
<div class="m" style="left:76.70px;top:421.48px;color:#bcbec4"><span style="color:#7a7e85">#2025-10-03 18:30:42.050  7610-7677  MainActivity            com.example.test_camera              I  E2E_inference_ms=56.31</span></div>
<div class="ln" style="left:-5.80px;top:447.00px;color:#4b5059">38</div>
<div class="m" style="left:76.70px;top:446.40px;color:#bcbec4"><span style="color:#7a7e85">#2025-10-03 18:30:42.050  7610-7610  MainActivity            com.example.test_camera              I  EI_timing_us dsp=0</span></div>
<div class="ln" style="left:-5.80px;top:471.92px;color:#4b5059">39</div>
<div class="m" style="left:76.70px;top:471.32px;color:#bcbec4"><span style="color:#7a7e85">#2025-10-03 18:30:42.086  7610-7610  OpenGLRenderer          com.example.test_camera              D  onFlyCompress</span></div>
<div class="ln" style="left:-5.80px;top:496.84px;color:#4b5059">40</div>
<div class="ln" style="left:-5.80px;top:521.76px;color:#4b5059">41</div>
<div class="ln" style="left:-5.80px;top:546.68px;color:#4b5059">42</div>
<div class="m" style="left:76.70px;top:546.08px;color:#bcbec4"><span style="color:#f0c36e">link_directories</span>(<span style="color:#cf8e6d">${</span>CMAKE_SOURCE_DIR<span style="color:#cf8e6d">}</span>/<span class="sq">tflite</span>/android64)</div>
<div class="ln" style="left:-5.80px;top:571.60px;color:#4b5059">43</div>
<div class="ln" style="left:-5.80px;top:596.52px;color:#4b5059">44</div>
<div class="ln" style="left:-5.80px;top:621.44px;color:#4b5059">45</div>
<div class="m" style="left:76.70px;top:620.84px;color:#bcbec4"><span style="color:#f0c36e">add_library</span>(<span style="color:#cf8e6d">${</span>CMAKE_PROJECT_NAME<span style="color:#cf8e6d">}</span> <span style="color:#cf8e6d">SHARED</span></div>
<svg style="left:0;top:0" width="1117" height="647"><path d="M112.42 69.83 L114.47 67.53 L116.52 69.83 L118.57 67.53 L120.62 69.83 L122.67 67.53 L124.72 69.83 L126.77 67.53 L128.82 69.83 L130.87 67.53 L132.92 69.83 L134.97 67.53 L137.02 69.83 L139.07 67.53 L141.12 69.83 L143.17 67.53 L145.22 69.83 L147.27 67.53 L149.32 69.83 L151.37 67.53 L153.42 69.83 L155.47 67.53 L157.52 69.83 L159.57 67.53 L161.62 69.83 L163.67 67.53" stroke="#5fad65" stroke-width="1.1" fill="none" stroke-linejoin="round"/></svg>
<svg style="left:0;top:0" width="1117" height="647"><path d="M422.35 69.83 L424.40 67.53 L426.45 69.83 L428.50 67.53 L430.55 69.83 L432.60 67.53 L434.65 69.83 L436.70 67.53 L438.75 69.83 L440.80 67.53 L442.85 69.83 L444.90 67.53 L446.95 69.83 L449.00 67.53 L451.05 69.83 L453.10 67.53 L455.15 69.83 L457.20 67.53 L459.25 69.83 L461.30 67.53 L463.35 69.83 L465.40 67.53 L467.44 69.83 L469.50 67.53 L471.55 69.83 L473.60 67.53" stroke="#5fad65" stroke-width="1.1" fill="none" stroke-linejoin="round"/></svg>
<svg style="left:0;top:0" width="1117" height="647"><path d="M510.90 169.51 L512.95 167.21 L515.00 169.51 L517.05 167.21 L519.10 169.51 L521.14 167.21 L523.20 169.51 L525.25 167.21 L527.30 169.51 L529.35 167.21 L531.40 169.51 L533.45 167.21 L535.50 169.51 L537.55 167.21 L539.60 169.51 L541.65 167.21 L543.70 169.51 L545.75 167.21 L547.80 169.51 L549.85 167.21 L551.89 169.51 L553.95 167.21 L556.00 169.51 L558.05 167.21 L560.10 169.51 L562.14 167.21 L564.20 169.51 L566.25 167.21 L568.29 169.51 L570.35 167.21 L572.39 169.51 L574.45 167.21 L576.50 169.51 L578.54 167.21 L580.60 169.51 L582.64 167.21 L584.69 169.51 L586.75 167.21 L588.79 169.51 L590.85 167.21 L592.89 169.51 L594.94 167.21 L597.00 169.51 L599.04 167.21 L601.10 169.51 L603.14 167.21 L605.19 169.51 L607.25 167.21" stroke="#5fad65" stroke-width="1.1" fill="none" stroke-linejoin="round"/></svg>
<svg style="left:0;top:0" width="1117" height="647"><path d="M333.80 194.43 L335.85 192.13 L337.90 194.43 L339.94 192.13 L342.00 194.43 L344.05 192.13 L346.10 194.43 L348.15 192.13 L350.19 194.43 L352.25 192.13 L354.30 194.43 L356.35 192.13 L358.40 194.43 L360.45 192.13 L362.50 194.43 L364.55 192.13 L366.60 194.43 L368.65 192.13 L370.69 194.43 L372.75 192.13 L374.80 194.43 L376.85 192.13 L378.89 194.43 L380.94 192.13 L383.00 194.43 L385.05 192.13" stroke="#5fad65" stroke-width="1.1" fill="none" stroke-linejoin="round"/></svg>
<svg style="left:0;top:0" width="1117" height="647"><path d="M138.99 319.03 L141.04 316.73 L143.09 319.03 L145.14 316.73 L147.19 319.03 L149.24 316.73 L151.29 319.03 L153.34 316.73 L155.39 319.03 L157.44 316.73 L159.49 319.03 L161.54 316.73 L163.59 319.03 L165.64 316.73 L167.69 319.03 L169.74 316.73 L171.79 319.03 L173.84 316.73 L175.89 319.03 L177.94 316.73 L179.99 319.03 L182.03 316.73 L184.09 319.03 L186.13 316.73 L188.19 319.03 L190.23 316.73 L192.28 319.03 L194.33 316.73 L196.38 319.03 L198.43 316.73 L200.48 319.03 L202.53 316.73 L204.58 319.03 L206.63 316.73 L208.68 319.03" stroke="#5fad65" stroke-width="1.1" fill="none" stroke-linejoin="round"/></svg>
<svg style="left:0;top:0" width="1117" height="647"><path d="M404.63 568.23 L406.69 565.93 L408.74 568.23 L410.78 565.93 L412.83 568.23 L414.88 565.93 L416.94 568.23 L418.99 565.93 L421.03 568.23 L423.08 565.93 L425.13 568.23 L427.19 565.93 L429.24 568.23 L431.28 565.93 L433.33 568.23 L435.38 565.93 L437.44 568.23 L439.49 565.93 L441.53 568.23 L443.58 565.93 L445.63 568.23 L447.69 565.93 L449.73 568.23 L451.78 565.93 L453.83 568.23 L455.88 565.93" stroke="#5fad65" stroke-width="1.1" fill="none" stroke-linejoin="round"/></svg>
<div class="a" style="left:1107.8px;top:150.8px;width:6px;height:166px;border-radius:3px;background:rgba(255,255,255,.17)"></div>
</div>
<div class="t " style="left:1500.00px;top:77.80px;font-size:11px;color:#b4b8bf;letter-spacing:-0.3px">17</div>
<svg style="left:1485.05px;top:82.05px" width="12.50" height="12.50" viewBox="0 0 16 16" fill="none" stroke-width="1.2"><path d="M2 7 5.500 10.600 12.800 2.300" stroke="#5fad65" stroke-width="1.500" stroke-linecap="round" stroke-linejoin="round"/><path d="M2 13.600c1-1.400 2-1.400 3 0s2 1.400 3 0 2-1.400 3 0 1.500 1.200 2 .4" stroke="#5fad65" stroke-width="1"/></svg>
<svg style="left:1516.24px;top:80.24px" width="14.72" height="14.72" viewBox="0 0 16 16" fill="none" stroke-width="1.2"><path d="M4.7 9.6 8 6.3l3.3 3.3" stroke="#ced0d6" stroke-linecap="round" stroke-linejoin="round" stroke-width="1.05"/></svg>
<svg style="left:1535.64px;top:80.84px" width="14.72" height="14.72" viewBox="0 0 16 16" fill="none" stroke-width="1.2"><path d="M4.7 6.4 8 9.7l3.3-3.3" stroke="#ced0d6" stroke-linecap="round" stroke-linejoin="round" stroke-width="1.05"/></svg>
<div class="a" style="left:437.00px;top:722.30px;width:1118.00px;height:1.00px;background:#313438;"></div>
<div class="t b" style="left:1566.00px;top:47.70px;font-size:13px;letter-spacing:-0.538px;">Running Devices</div>
<div class="t " style="left:1707.20px;top:47.70px;font-size:13px;letter-spacing:-0.488px;">Q...</div>
<div class="a" style="left:1555.00px;top:75.00px;width:303.00px;height:1.00px;background:#313438;"></div>
<div class="a" style="left:1677.90px;top:74.20px;width:66.10px;height:2.60px;background:#6c707a;border-radius:1.3px"></div>
<div class="a" style="left:1555.00px;top:108.30px;width:303.00px;height:1.00px;background:#313438;"></div>
<div class="a" style="left:1817.80px;top:626.80px;width:25.60px;height:99.00px;background:transparent;border:1px solid #3c3f44;border-radius:4px"></div>
<div class="t b" style="left:1823.30px;top:678.30px;font-size:10.5px;letter-spacing:-0.3px;color:#ced0d6">1:1</div>
<div class="a" id="cam" style="left:1555px;top:359px;width:303.5px;height:136px;overflow:hidden;background:#8a8f96">
<svg width="304" height="136" viewBox="0 0 304 136" style="left:0;top:0"><defs><filter id="b1" x="-10%" y="-10%" width="120%" height="120%"><feGaussianBlur stdDeviation="0.9"/></filter><filter id="b2" x="-20%" y="-20%" width="140%" height="140%"><feGaussianBlur stdDeviation="2.2"/></filter><linearGradient id="wall" x1="0" y1="0" x2="1" y2="1"><stop offset="0" stop-color="#bfc1cd"/><stop offset=".55" stop-color="#acaebb"/><stop offset="1" stop-color="#9b9daa"/></linearGradient><linearGradient id="conc" x1="0" y1="1" x2="1" y2="0"><stop offset="0" stop-color="#66686a"/><stop offset=".5" stop-color="#858789"/><stop offset="1" stop-color="#a7a9ab"/></linearGradient><linearGradient id="wood" x1="0" y1="0" x2="1" y2="1"><stop offset="0" stop-color="#8f5c2a"/><stop offset=".4" stop-color="#b27431"/><stop offset=".75" stop-color="#c88a3c"/><stop offset="1" stop-color="#d19a4c"/></linearGradient><linearGradient id="chrome" x1="0" y1="0" x2="1" y2="0"><stop offset="0" stop-color="#f4f6fa"/><stop offset=".25" stop-color="#1c2030"/><stop offset=".45" stop-color="#e9ecf2"/><stop offset=".75" stop-color="#c9ccd4"/><stop offset="1" stop-color="#5a5d66"/></linearGradient><linearGradient id="wdark" x1="0" y1="0" x2="0" y2="1"><stop offset="0" stop-color="#3a220e" stop-opacity=".5"/><stop offset=".55" stop-color="#3a220e" stop-opacity=".22"/><stop offset="1" stop-color="#3a220e" stop-opacity="0"/></linearGradient><clipPath id="cc"><rect width="304" height="136"/></clipPath></defs><g clip-path="url(#cc)"><rect width="304" height="136" fill="url(#wall)"/><path d="M40.8 0.0 L146.4 0.0 L114.4 45.6 L95.2 136.0 L8.8 136.0Z" fill="url(#conc)" filter="url(#b1)"/><path d="M116.0 7.2 L136.8 0.0 L146.4 0.0 L116.0 45.6 L108.0 39.2Z" fill="#b7b9bb" filter="url(#b1)"/><path d="M0.0 0.0 L39.2 0.0 L10.4 136.0 L0.0 136.0Z" fill="#121416" filter="url(#b1)"/><ellipse cx="16.8" cy="21.6" rx="5" ry="3.5" fill="#d9f3f3" filter="url(#b2)"/><ellipse cx="8.0" cy="76.0" rx="7" ry="5" fill="#8a2a2a" filter="url(#b2)"/><ellipse cx="12.0" cy="44.0" rx="9" ry="4" fill="#4a5560" filter="url(#b2)"/><path d="M36.0 0.0 L56.0 0.0 L30.4 136.0 L8.0 136.0Z" fill="#f6f6f6" filter="url(#b1)"/><path d="M29.6 -0.8 L151.2 -0.8 L133.6 5.3 L40.8 6.9Z" fill="#c0393b" filter="url(#b1)"/><path d="M0.0 -0.8 L34.4 -0.8 L32.8 6.4 L0.0 7.2Z" fill="#e9e9ec" filter="url(#b1)"/><path d="M141.6 119.2 L237.6 127.2 L242.4 136.0 L136.8 136.0Z" fill="#b4b6b8" filter="url(#b1)"/><path d="M142.4 0.0 L178.4 0.0 L236.8 128.8 L143.2 120.0 L125.3 81.6 L117.6 44.8Z" fill="url(#wood)" filter="url(#b1)"/><path d="M142.4 0.0 L178.4 0.0 L216.8 85.6 L127.2 85.6 L125.3 81.6 L117.6 44.8Z" fill="url(#wdark)" filter="url(#b1)"/><path d="M152.8 0.8 L187.2 20.0" stroke="#3a1e0c" stroke-width="1.1" opacity=".75" filter="url(#b1)"/><path d="M146.4 8.8 L190.4 28.0" stroke="#3a1e0c" stroke-width="1.1" opacity=".75" filter="url(#b1)"/><path d="M140.0 18.4 L194.4 36.0" stroke="#3a1e0c" stroke-width="1.1" opacity=".75" filter="url(#b1)"/><path d="M132.0 28.0 L199.2 44.0" stroke="#3a1e0c" stroke-width="1.1" opacity=".75" filter="url(#b1)"/><path d="M124.0 39.2 L202.4 50.4" stroke="#3a1e0c" stroke-width="1.1" opacity=".75" filter="url(#b1)"/><path d="M176.8 58.4 L205.6 55.2" stroke="#3a1e0c" stroke-width="1.1" opacity=".75" filter="url(#b1)"/><path d="M178.4 68.0 L208.8 63.2" stroke="#3a1e0c" stroke-width="1.1" opacity=".75" filter="url(#b1)"/><path d="M176.8 77.6 L213.6 72.8" stroke="#3a1e0c" stroke-width="1.1" opacity=".75" filter="url(#b1)"/><path d="M146.4 87.2 L216.8 80.8" stroke="#3a1e0c" stroke-width="1.1" opacity=".75" filter="url(#b1)"/><path d="M143.2 98.4 L221.6 93.6" stroke="#3a1e0c" stroke-width="1.1" opacity=".75" filter="url(#b1)"/><path d="M144.8 109.6 L200.8 106.4" stroke="#3a1e0c" stroke-width="1.1" opacity=".75" filter="url(#b1)"/><path d="M162.4 5.6 L184.8 15.2" stroke="#3a1e0c" stroke-width="1.1" opacity=".75" filter="url(#b1)"/><path d="M157.6 3.2 L188.8 23.2" stroke="#3a1e0c" stroke-width="1.1" opacity=".75" filter="url(#b1)"/><path d="M149.6 5.6 L189.3 25.6" stroke="#3a1e0c" stroke-width="1.1" opacity=".75" filter="url(#b1)"/><path d="M143.2 13.6 L192.5 32.0" stroke="#3a1e0c" stroke-width="1.1" opacity=".75" filter="url(#b1)"/><path d="M136.0 23.2 L196.8 40.0" stroke="#3a1e0c" stroke-width="1.1" opacity=".75" filter="url(#b1)"/><path d="M128.0 33.6 L200.8 47.2" stroke="#3a1e0c" stroke-width="1.1" opacity=".75" filter="url(#b1)"/><path d="M168.8 0.8 L183.2 10.4" stroke="#3a1e0c" stroke-width="1.1" opacity=".75" filter="url(#b1)"/><path d="M159.2 0.0 L178.4 0.0 L200.8 45.6 L186.4 23.2Z" fill="#7a4a1e" opacity=".55" filter="url(#b1)"/><path d="M103.2 49.6 L120.8 51.7 L125.9 80.8 L144.0 119.2 L140.8 127.2 L163.2 136.0 L88.8 136.0 L90.7 87.2 L95.2 63.2Z" fill="#08080a" filter="url(#b1)"/><path d="M123.2 80.8 L127.2 80.8 L128.8 122.4 L124.0 122.4Z" fill="#5a1420" opacity=".7" filter="url(#b1)"/><path d="M152.8 56.0 L175.2 57.1 L178.4 66.4 L175.2 76.8 L152.8 78.4Z" fill="#0b0b0d" filter="url(#b1)"/><path d="M108.0 64.0 L119.2 59.2 L146.4 56.8 L157.6 60.0 L160.0 68.0 L157.6 76.8 L133.6 76.8 L114.4 74.4 L107.2 68.0Z" fill="url(#chrome)" filter="url(#b1)"/><path d="M116.0 61.6 L130.4 59.2 L132.0 74.4 L116.8 72.0Z" fill="#0d1020" opacity=".9" filter="url(#b1)"/><path d="M101.6 65.1 L109.6 63.5 L109.6 67.2Z" fill="#e8e8ee" filter="url(#b1)"/><path d="M101.3 67.7 L177.6 67.7 L177.6 90.7 L101.3 90.7Z" stroke="#c23a2e" stroke-width=".7" fill="none" opacity=".9"/><rect x="0" y="122.4" width="287.5" height="14" fill="#1c1e20" opacity=".62"/><rect x="287.3" y="0" width="17" height="136" fill="#ebebeb"/><rect x="292.900" y="26.400" width="4.800" height="4.800" fill="#8a8a8a"/><circle cx="295.300" cy="68" r="2.700" fill="#8a8a8a"/><path d="M297.500 104.700v5.800l-4.700-2.900Z" fill="#8a8a8a"/></g></svg>
<div class="a" style="left:4px;top:125.8px;font-size:4.3px;line-height:6px;color:#e8e8e8;white-space:pre;letter-spacing:0">Top: null 0%  Detections: 1</div>
<div class="a" style="left:3px;top:0.8px;font-size:3.6px;line-height:5px;color:#f0f0f0;white-space:pre;letter-spacing:0">12:31</div>
</div>
<svg style="left:1688.04px;top:50.14px" width="14.72" height="14.72" viewBox="0 0 16 16" fill="none" stroke-width="1.2"><rect x="4.3" y="1.8" width="7.6" height="12.4" rx="1.2" stroke="#ced0d6"/><path d="M6.8 3.8h2.6" stroke="#ced0d6" stroke-linecap="round"/><circle cx="12.6" cy="13.6" r="2.6" fill="#2b2d30"/><circle cx="12.6" cy="13.6" r="1.7" fill="#5fcf5f"/></svg>
<svg style="left:1748.34px;top:50.14px" width="14.72" height="14.72" viewBox="0 0 16 16" fill="none" stroke-width="1.2"><path d="M8 1.800v12.400M1.800 8h12.400" stroke="#ced0d6" stroke-width="1.15" stroke-linecap="round" stroke-linejoin="round"/></svg>
<svg style="left:1783.84px;top:49.94px" width="14.72" height="14.72" viewBox="0 0 16 16" fill="none" stroke-width="1.2"><rect x="1.500" y="2.300" width="13" height="11.400" rx=".8" stroke="#ced0d6" stroke-width="1.15" stroke-linecap="round" stroke-linejoin="round"/><path d="M1.500 3.800h13v1.400h-13Z" fill="#ced0d6" stroke="#ced0d6" stroke-width=".8"/></svg>
<svg style="left:1807.54px;top:50.14px" width="14.72" height="14.72" viewBox="0 0 16 16" fill="none" stroke-width="1.2"><circle cx="8" cy="3" r="1.100" fill="#ced0d6"/><circle cx="8" cy="8" r="1.100" fill="#ced0d6"/><circle cx="8" cy="13" r="1.100" fill="#ced0d6"/></svg>
<svg style="left:1831.64px;top:50.14px" width="14.72" height="14.72" viewBox="0 0 16 16" fill="none" stroke-width="1.2"><path d="M1.800 8h12.400" stroke="#ced0d6" stroke-width="1.15" stroke-linecap="round" stroke-linejoin="round"/></svg>
<svg style="left:1566.14px;top:85.24px" width="14.72" height="14.72" viewBox="0 0 16 16" fill="none" stroke-width="1.2"><path d="M8 2v6.300" stroke="#ced0d6" stroke-width="1.15" stroke-linecap="round" stroke-linejoin="round"/><path d="M4.300 3.600A6 6 0 1 0 11.700 3.600" stroke="#ced0d6" stroke-width="1.15" stroke-linecap="round" stroke-linejoin="round"/></svg>
<svg style="left:1589.74px;top:85.24px" width="14.72" height="14.72" viewBox="0 0 16 16" fill="none" stroke-width="1.2"><path d="M1.500 6h2.400l4.500-3.300v10.600L3.900 10H1.500Z" stroke="#ced0d6" stroke-width="1.15" stroke-linecap="round" stroke-linejoin="round"/><path d="M10.400 5.300a4 4 0 0 1 0 5.400M12.300 3.300a7 7 0 0 1 0 9.400" stroke="#ced0d6" stroke-width="1.15" stroke-linecap="round" stroke-linejoin="round"/></svg>
<svg style="left:1612.64px;top:85.24px" width="14.72" height="14.72" viewBox="0 0 16 16" fill="none" stroke-width="1.2"><path d="M2.700 6h2.400l4.500-3.300v10.600L5.100 10H2.700Z" stroke="#ced0d6" stroke-width="1.15" stroke-linecap="round" stroke-linejoin="round"/><path d="M11.600 5.300a4 4 0 0 1 0 5.400" stroke="#ced0d6" stroke-width="1.15" stroke-linecap="round" stroke-linejoin="round"/></svg>
<div class="a" style="left:1636.20px;top:83.40px;width:1.00px;height:18.00px;background:#43454a;"></div>
<svg style="left:1644.64px;top:85.24px" width="14.72" height="14.72" viewBox="0 0 16 16" fill="none" stroke-width="1.2"><rect x="0.700" y="2.400" width="7.800" height="11.600" rx="1.100" stroke="#ced0d6" stroke-width="1.15" stroke-linecap="round" stroke-linejoin="round"/><path d="M3.800 4.400h1.600" stroke="#ced0d6" stroke-width="1.15" stroke-linecap="round" stroke-linejoin="round"/><path d="M10.300 13.800C13.300 13.300 15 11 15 8.400 15 6 13.700 4.200 11.600 3.500" stroke="#548af7" stroke-width="1.200" stroke-linecap="round"/><path d="M13.500 1.800 10.400 3.300 12.300 6Z" fill="#548af7"/></svg>
<svg style="left:1668.64px;top:85.24px" width="14.72" height="14.72" viewBox="0 0 16 16" fill="none" stroke-width="1.2"><rect x="7.500" y="2.400" width="7.800" height="11.600" rx="1.100" stroke="#ced0d6" stroke-width="1.15" stroke-linecap="round" stroke-linejoin="round"/><path d="M10.600 4.400h1.600" stroke="#ced0d6" stroke-width="1.15" stroke-linecap="round" stroke-linejoin="round"/><path d="M5.700 13.800C2.700 13.300 1 11 1 8.400 1 6 2.300 4.200 4.400 3.500" stroke="#548af7" stroke-width="1.200" stroke-linecap="round"/><path d="M2.500 1.800 5.600 3.300 3.700 6Z" fill="#548af7"/></svg>
<div class="a" style="left:1691.20px;top:83.40px;width:1.00px;height:18.00px;background:#43454a;"></div>
<svg style="left:1699.04px;top:85.24px" width="14.72" height="14.72" viewBox="0 0 16 16" fill="none" stroke-width="1.2"><path d="M10.200 4 4.400 8l5.800 4Z" stroke="#ced0d6" stroke-width="1.15" stroke-linecap="round" stroke-linejoin="round"/></svg>
<svg style="left:1722.94px;top:85.24px" width="14.72" height="14.72" viewBox="0 0 16 16" fill="none" stroke-width="1.2"><circle cx="8" cy="8" r="4.300" stroke="#ced0d6" stroke-width="1.15" stroke-linecap="round" stroke-linejoin="round"/></svg>
<svg style="left:1746.64px;top:85.24px" width="14.72" height="14.72" viewBox="0 0 16 16" fill="none" stroke-width="1.2"><rect x="4.300" y="4.300" width="7.400" height="7.400" rx=".8" stroke="#ced0d6" stroke-width="1.15" stroke-linecap="round" stroke-linejoin="round"/></svg>
<svg style="left:1766.64px;top:85.24px" width="14.72" height="14.72" viewBox="0 0 16 16" fill="none" stroke-width="1.2"><path d="M6.4 4.7 9.7 8l-3.3 3.3" stroke="#ced0d6" stroke-linecap="round" stroke-linejoin="round" stroke-width="1.05"/></svg>
<svg style="left:1800.34px;top:85.24px" width="14.72" height="14.72" viewBox="0 0 16 16" fill="none" stroke-width="1.2"><path d="M3.800 10.800H2.500V2.500H12.500V4" stroke="#ced0d6" stroke-width="1.15" stroke-linecap="round" stroke-linejoin="round"/><path d="M9 12.300H4.800V5H14.500V8" stroke="#ced0d6" stroke-width="1.15" stroke-linecap="round" stroke-linejoin="round"/><circle cx="12" cy="11.200" r="2.200" stroke="#ced0d6" stroke-width="1.15" stroke-linecap="round" stroke-linejoin="round"/><path d="M13.700 12.900 15.300 14.500" stroke="#ced0d6" stroke-width="1.15" stroke-linecap="round" stroke-linejoin="round"/></svg>
<div class="a" style="left:1822.70px;top:83.40px;width:1.00px;height:18.00px;background:#43454a;"></div>
<svg style="left:1831.54px;top:85.24px" width="14.72" height="14.72" viewBox="0 0 16 16" fill="none" stroke-width="1.2"><path d="M2.800 8.600 6.300 12 13.400 4.300" stroke="#5fad65" stroke-width="1.500" stroke-linecap="round" stroke-linejoin="round"/></svg>
<svg style="left:1868.80px;top:47.60px" width="18.40" height="18.40" viewBox="0 0 20 20" fill="none" stroke-width="1.2"><path d="M4.300 14.500V9.200C4.300 5.800 6.700 3.200 10 3.200s5.700 2.600 5.700 6v5.300L17.700 16.200H2.300Z" stroke="#ced0d6" stroke-width="1.45" stroke-linecap="round" stroke-linejoin="round"/><path d="M8.300 18.200c.9.800 2.500.8 3.400 0" stroke="#ced0d6" stroke-width="1.45" stroke-linecap="round" stroke-linejoin="round"/></svg>
<div class="a" style="left:1880.60px;top:47.50px;width:6.8px;height:6.8px;border-radius:50%;background:#548af7;box-shadow:0 0 0 1.2px #2b2d30"></div>
<svg style="left:1868.70px;top:84.20px" width="18.40" height="18.40" viewBox="0 0 20 20" fill="none" stroke-width="1.2"><path d="M1.250 16.500V13.750C1.250 10.400 3.500 7.750 7 7.400 8.100 5.250 10.400 4.100 12.750 4.400 14.500 4.500 15.750 5.400 16.400 6.600 17.600 6.250 18.400 5 18.100 3.400L19.500 3.600C19.900 6.100 18.500 8.250 16.500 8.750 16.250 11 15 12.900 13.100 13.600V16.500H10.200V14.800C9.400 15.400 8.200 15.400 7.400 14.800V16.500Z" stroke="#ced0d6" stroke-width="1.45" stroke-linecap="round" stroke-linejoin="round"/><path d="M7.800 10.500C9.200 9.400 11.200 9.900 11.900 11.600" stroke="#ced0d6" stroke-width="1.45" stroke-linecap="round" stroke-linejoin="round"/><circle cx="14.200" cy="7.800" r=".9" fill="#ced0d6"/></svg>
<svg style="left:1868.70px;top:121.30px" width="18.40" height="18.40" viewBox="0 0 20 20" fill="none" stroke-width="1.2"><path d="M8.300 17.500H4.500A1.500 1.500 0 0 1 3 16V3.500A1.500 1.500 0 0 1 4.500 2H11A1.500 1.500 0 0 1 12.500 3.500V9.500" stroke="#ced0d6" stroke-width="1.45" stroke-linecap="round" stroke-linejoin="round"/><path d="M6.500 4.800h2.500" stroke="#ced0d6" stroke-width="1.45" stroke-linecap="round" stroke-linejoin="round"/><path d="M9.300 17.800C9.500 14.700 11.500 12.900 14.100 12.900S18.700 14.700 18.900 17.800Z" stroke="#ced0d6" stroke-width="1.45" stroke-linecap="round" stroke-linejoin="round"/><path d="M11.300 13.300 10.200 11.400M16.900 13.300 18 11.400" stroke="#ced0d6" stroke-width="1.45" stroke-linecap="round" stroke-linejoin="round"/></svg>
<div class="a" style="left:1864.00px;top:153.50px;width:28.00px;height:27.60px;background:#44464b;border-radius:6px"></div>
<svg style="left:1868.30px;top:158.30px" width="18.40" height="18.40" viewBox="0 0 20 20" fill="none" stroke-width="1.2"><path d="M6.500 17.500H4.500A1.500 1.500 0 0 1 3 16V3.500A1.500 1.500 0 0 1 4.500 2H11" stroke="#ced0d6" stroke-width="1.45" stroke-linecap="round" stroke-linejoin="round"/><path d="M6.500 4.800H9" stroke="#ced0d6" stroke-width="1.45" stroke-linecap="round" stroke-linejoin="round"/><path d="M11.800 6.500v2.500" stroke="#ced0d6" stroke-width="1.45" stroke-linecap="round" stroke-linejoin="round"/><rect x="8.300" y="10.300" width="10" height="5.300" rx="1" stroke="#ced0d6" stroke-width="1.45" stroke-linecap="round" stroke-linejoin="round"/><path d="M8.500 18.300H18" stroke="#ced0d6" stroke-width="1.45" stroke-linecap="round" stroke-linejoin="round"/></svg>
<div class="a" style="left:1880.80px;top:157.80px;width:6.4px;height:6.4px;border-radius:50%;background:#5fad65;box-shadow:0 0 0 1.2px #44464b"></div>
<svg style="left:1869.25px;top:195.55px" width="17.50" height="17.50" viewBox="0 0 20 20" fill="none" stroke-width="1.2"><path d="M10 1.500C10.600 6.500 13.500 9.400 18.500 10 13.500 10.600 10.600 13.500 10 18.500 9.400 13.500 6.500 10.600 1.500 10 6.500 9.400 9.400 6.500 10 1.500Z" fill="#dfe1e5"/></svg>
<svg style="left:1823.14px;top:632.64px" width="14.72" height="14.72" viewBox="0 0 16 16" fill="none" stroke-width="1.2"><path d="M8 1.800v12.400M1.800 8h12.400" stroke="#ced0d6" stroke-width="1.15" stroke-linecap="round" stroke-linejoin="round"/></svg>
<svg style="left:1823.14px;top:656.44px" width="14.72" height="14.72" viewBox="0 0 16 16" fill="none" stroke-width="1.2"><path d="M1.800 8h12.400" stroke="#5a5d63" stroke-width="1.15" stroke-linecap="round" stroke-linejoin="round"/></svg>
<svg style="left:1823.14px;top:704.64px" width="14.72" height="14.72" viewBox="0 0 16 16" fill="none" stroke-width="1.2"><rect x="1.500" y="2.500" width="13" height="11" rx="1.500" stroke="#5a5d63" stroke-width="1.100"/><path d="M4.300 7.500V5.300H6.500M11.700 8.500v2.200H9.500" stroke="#5a5d63" stroke-width="1.100" stroke-linecap="round" stroke-linejoin="round"/></svg>
<div class="t b" style="left:48.00px;top:755.30px;font-size:13px;letter-spacing:-0.254px;">Logcat</div>
<div class="t " style="left:113.70px;top:755.30px;font-size:13px;letter-spacing:0.142px;">Logcat</div>
<div class="a" style="left:38.00px;top:784.30px;width:1820.00px;height:1.00px;background:#1e1f22;"></div>
<div class="a" style="left:103.40px;top:781.60px;width:77.80px;height:2.70px;background:#3574f0;border-radius:1.4px"></div>
<div class="a" style="left:45.80px;top:793.00px;width:363.60px;height:26.80px;background:#2b2d30;border:1px solid #4e5157;border-radius:4px"></div>
<div class="t " style="left:77.60px;top:796.70px;font-size:13px;letter-spacing:-0.214px;">QUALCOMM Sun for arm64 (e04ae210)</div>
<div class="t " style="left:306.50px;top:796.70px;font-size:13px;letter-spacing:0.082px;color:#7c8087;width:81px;overflow:hidden;-webkit-mask-image:linear-gradient(90deg,#000 62px,transparent 80px)">Android 14, API 34</div>
<svg style="left:388.64px;top:799.64px" width="14.72" height="14.72" viewBox="0 0 16 16" fill="none" stroke-width="1.2"><path d="M4.7 6.4 8 9.7l3.3-3.3" stroke="#ced0d6" stroke-linecap="round" stroke-linejoin="round" stroke-width="1.05"/></svg>
<div class="a" style="left:418.60px;top:791.20px;width:1413.00px;height:31.00px;background:#2b2d30;border:2px solid #3574f0;border-radius:4px"></div>
<div class="a" style="left:445.50px;top:796.50px;width:80.00px;height:16.50px;background:#4a6349;"></div>
<div class="t " style="left:446.00px;top:794.60px;font-size:12.6px;letter-spacing:0.048px;">package:mine</div>
<div class="t " style="left:528.60px;top:794.60px;font-size:12.6px;letter-spacing:0.154px;color:#b9bcc3">inference</div>
<div class="t " style="left:1781.50px;top:796.50px;letter-spacing:0;font-size:12.5px">Cc</div>
<div class="a" style="left:1803.60px;top:796.00px;width:1.00px;height:21.00px;background:#393b40;"></div>
<div class="a" style="left:73px;top:829px;width:1785px;height:296px;overflow:hidden">
<div class="a" style="left:863.08px;top:0;width:26.7px;height:271.60px;background:#69875a"></div>
<div class="m" style="left:13.00px;top:-3.10px"><span style="color:#c9ccd2">2024-05-29 12:31:40.565 21122-21310</span> <span style="color:#56b6f7">MainActivity</span>            <span style="color:#c9ccd2">com.example.test_camera</span>             <span style="color:#e4ecdf"> I </span> <span style="color:#b5c23a">E2E_inference_ms=1.964896</span></div>
<div class="m" style="left:13.00px;top:21.82px"><span style="color:#c9ccd2">2024-05-29 12:31:40.608 21122-21308</span> <span style="color:#56b6f7">MainActivity</span>            <span style="color:#c9ccd2">com.example.test_camera</span>             <span style="color:#e4ecdf"> I </span> <span style="color:#b5c23a">E2E_inference_ms=2.078593</span></div>
<div class="m" style="left:13.00px;top:46.74px"><span style="color:#c9ccd2">2024-05-29 12:31:40.643 21122-21308</span> <span style="color:#56b6f7">MainActivity</span>            <span style="color:#c9ccd2">com.example.test_camera</span>             <span style="color:#e4ecdf"> I </span> <span style="color:#b5c23a">E2E_inference_ms=1.924218</span></div>
<div class="m" style="left:13.00px;top:71.66px"><span style="color:#c9ccd2">2024-05-29 12:31:40.685 21122-21308</span> <span style="color:#56b6f7">MainActivity</span>            <span style="color:#c9ccd2">com.example.test_camera</span>             <span style="color:#e4ecdf"> I </span> <span style="color:#b5c23a">E2E_inference_ms=1.927813</span></div>
<div class="m" style="left:13.00px;top:96.58px"><span style="color:#c9ccd2">2024-05-29 12:31:40.738 21122-21308</span> <span style="color:#56b6f7">MainActivity</span>            <span style="color:#c9ccd2">com.example.test_camera</span>             <span style="color:#e4ecdf"> I </span> <span style="color:#b5c23a">E2E_inference_ms=1.990625</span></div>
<div class="m" style="left:13.00px;top:121.50px"><span style="color:#c9ccd2">2024-05-29 12:31:40.777 21122-21310</span> <span style="color:#56b6f7">MainActivity</span>            <span style="color:#c9ccd2">com.example.test_camera</span>             <span style="color:#e4ecdf"> I </span> <span style="color:#b5c23a">E2E_inference_ms=2.022343</span></div>
<div class="m" style="left:13.00px;top:146.42px"><span style="color:#c9ccd2">2024-05-29 12:31:40.819 21122-21310</span> <span style="color:#56b6f7">MainActivity</span>            <span style="color:#c9ccd2">com.example.test_camera</span>             <span style="color:#e4ecdf"> I </span> <span style="color:#b5c23a">E2E_inference_ms=2.268958</span></div>
<div class="m" style="left:13.00px;top:171.34px"><span style="color:#c9ccd2">2024-05-29 12:31:40.857 21122-21310</span> <span style="color:#56b6f7">MainActivity</span>            <span style="color:#c9ccd2">com.example.test_camera</span>             <span style="color:#e4ecdf"> I </span> <span style="color:#b5c23a">E2E_inference_ms=1.979323</span></div>
<div class="m" style="left:13.00px;top:196.26px"><span style="color:#c9ccd2">2024-05-29 12:31:40.898 21122-21310</span> <span style="color:#56b6f7">MainActivity</span>            <span style="color:#c9ccd2">com.example.test_camera</span>             <span style="color:#e4ecdf"> I </span> <span style="color:#b5c23a">E2E_inference_ms=2.012396</span></div>
<div class="m" style="left:13.00px;top:221.18px"><span style="color:#c9ccd2">2024-05-29 12:31:40.950 21122-21310</span> <span style="color:#56b6f7">MainActivity</span>            <span style="color:#c9ccd2">com.example.test_camera</span>             <span style="color:#e4ecdf"> I </span> <span style="color:#b5c23a">E2E_inference_ms=2.0025</span></div>
<div class="m" style="left:13.00px;top:246.10px"><span style="color:#c9ccd2">2024-05-29 12:31:40.990 21122-21310</span> <span style="color:#56b6f7">MainActivity</span>            <span style="color:#c9ccd2">com.example.test_camera</span>             <span style="color:#e4ecdf"> I </span> <span style="color:#b5c23a">E2E_inference_ms=1.975312</span></div>
<div class="a" style="left:1777.6px;top:271.5px;width:6.4px;height:22.3px;border-radius:3.2px;background:rgba(255,255,255,.24)"></div>
</div>
<svg style="left:159.94px;top:757.94px" width="14.72" height="14.72" viewBox="0 0 16 16" fill="none" stroke-width="1.2"><path d="M4.600 4.600 11.400 11.400M11.400 4.600 4.600 11.400" stroke="#868a91" stroke-width="1.050" stroke-linecap="round"/></svg>
<svg style="left:184.75px;top:757.25px" width="15.50" height="15.50" viewBox="0 0 16 16" fill="none" stroke-width="1.2"><path d="M8 1.800v12.400M1.800 8h12.400" stroke="#ced0d6" stroke-width="1.15" stroke-linecap="round" stroke-linejoin="round"/></svg>
<svg style="left:1807.54px;top:757.64px" width="14.72" height="14.72" viewBox="0 0 16 16" fill="none" stroke-width="1.2"><circle cx="8" cy="3" r="1.100" fill="#ced0d6"/><circle cx="8" cy="8" r="1.100" fill="#ced0d6"/><circle cx="8" cy="13" r="1.100" fill="#ced0d6"/></svg>
<svg style="left:1831.64px;top:757.64px" width="14.72" height="14.72" viewBox="0 0 16 16" fill="none" stroke-width="1.2"><path d="M1.800 8h12.400" stroke="#ced0d6" stroke-width="1.15" stroke-linecap="round" stroke-linejoin="round"/></svg>
<div class="a" style="left:45.00px;top:907.10px;width:20.00px;height:20.00px;background:#43454a;border-radius:4.5px"></div>
<svg style="left:47.64px;top:837.94px" width="14.72" height="14.72" viewBox="0 0 16 16" fill="none" stroke-width="1.2"><path d="M2.300 4.200h11.400M5.600 4V2.900C5.600 2.200 6.100 1.800 6.800 1.800h2.400c.7 0 1.200.4 1.200 1.100V4M3.500 4.400 4 13c0 .8.600 1.300 1.400 1.300h5.200c.8 0 1.400-.5 1.400-1.300l.5-8.600M6.700 7v4.500M9.300 7v4.500" stroke="#ced0d6" stroke-width="1.15" stroke-linecap="round" stroke-linejoin="round"/></svg>
<svg style="left:47.64px;top:861.84px" width="14.72" height="14.72" viewBox="0 0 16 16" fill="none" stroke-width="1.2"><rect x="3.200" y="2.200" width="3.600" height="11.600" rx="1" stroke="#ced0d6" stroke-width="1.15" stroke-linecap="round" stroke-linejoin="round"/><rect x="9.200" y="2.200" width="3.600" height="11.600" rx="1" stroke="#ced0d6" stroke-width="1.15" stroke-linecap="round" stroke-linejoin="round"/></svg>
<svg style="left:47.64px;top:885.64px" width="14.72" height="14.72" viewBox="0 0 16 16" fill="none" stroke-width="1.2"><path d="M13.300 6.500A5.600 5.600 0 1 0 13.600 9" stroke="#ced0d6" stroke-width="1.15" stroke-linecap="round" stroke-linejoin="round"/><path d="M13.700 2.200V6.600H9.300" stroke="#ced0d6" stroke-width="1.15" stroke-linecap="round" stroke-linejoin="round"/></svg>
<svg style="left:47.64px;top:909.74px" width="14.72" height="14.72" viewBox="0 0 16 16" fill="none" stroke-width="1.2"><path d="M1.800 3.500h3.800M1.800 7.200h3.800M1.800 13h12.400" stroke="#ced0d6" stroke-width="1.15" stroke-linecap="round" stroke-linejoin="round"/><path d="M10.700 2.500V10M7.900 7.300 10.700 10.100 13.500 7.300" stroke="#ced0d6" stroke-width="1.15" stroke-linecap="round" stroke-linejoin="round"/></svg>
<svg style="left:47.64px;top:934.04px" width="14.72" height="14.72" viewBox="0 0 16 16" fill="none" stroke-width="1.2"><path d="M8 13.500V3M4 6.800 8 2.800 12 6.800" stroke="#5a5d63" stroke-width="1.15" stroke-linecap="round" stroke-linejoin="round"/></svg>
<svg style="left:47.64px;top:957.94px" width="14.72" height="14.72" viewBox="0 0 16 16" fill="none" stroke-width="1.2"><path d="M8 2.500V13M4 9.200 8 13.200 12 9.200" stroke="#5a5d63" stroke-width="1.15" stroke-linecap="round" stroke-linejoin="round"/></svg>
<svg style="left:47.64px;top:982.34px" width="14.72" height="14.72" viewBox="0 0 16 16" fill="none" stroke-width="1.2"><path d="M2 3h12M2 7.300h10.200a2.300 2.300 0 0 1 0 4.600H9M2 11.900h3.200M10.800 9.900 8.700 11.900 10.800 13.900" stroke="#ced0d6" stroke-width="1.15" stroke-linecap="round" stroke-linejoin="round"/></svg>
<div class="a" style="left:45.90px;top:1004.00px;width:18.20px;height:1.00px;background:#43454a;"></div>
<svg style="left:47.64px;top:1012.34px" width="14.72" height="14.72" viewBox="0 0 16 16" fill="none" stroke-width="1.2"><path d="M2.700 5v8.300H11M13.500 2.500 6.800 9.200M6.600 4.700v4.700h4.700" stroke="#ced0d6" stroke-width="1.15" stroke-linecap="round" stroke-linejoin="round"/></svg>
<svg style="left:47.64px;top:1036.24px" width="14.72" height="14.72" viewBox="0 0 16 16" fill="none" stroke-width="1.2"><path d="M2.700 5.500v7.800h7.800M6.500 9.500 13.300 2.700M8.600 2.500h4.900v4.900" stroke="#ced0d6" stroke-width="1.15" stroke-linecap="round" stroke-linejoin="round"/></svg>
<div class="a" style="left:45.90px;top:1058.00px;width:18.20px;height:1.00px;background:#43454a;"></div>
<svg style="left:47.64px;top:1066.44px" width="14.72" height="14.72" viewBox="0 0 16 16" fill="none" stroke-width="1.2"><path d="M1.800 3.500h12.400M1.800 8h12.400M1.800 12.500h12.400" stroke="#ced0d6" stroke-width="1.15" stroke-linecap="round" stroke-linejoin="round"/><circle cx="10.600" cy="3.500" r="1.500" fill="#2b2d30" stroke="#ced0d6" stroke-width="1.15" stroke-linecap="round" stroke-linejoin="round"/><circle cx="5.600" cy="8" r="1.500" fill="#2b2d30" stroke="#ced0d6" stroke-width="1.15" stroke-linecap="round" stroke-linejoin="round"/><circle cx="9.300" cy="12.500" r="1.500" fill="#2b2d30" stroke="#ced0d6" stroke-width="1.15" stroke-linecap="round" stroke-linejoin="round"/></svg>
<div class="a" style="left:45.90px;top:1089.00px;width:18.20px;height:1.00px;background:#43454a;"></div>
<svg style="left:47.44px;top:1104.44px" width="14.72" height="14.72" viewBox="0 0 16 16" fill="none" stroke-width="1.2"><path d="M6.4 4.7 9.7 8l-3.3 3.3" stroke="#ced0d6" stroke-linecap="round" stroke-linejoin="round" stroke-width="1.05"/></svg>
<svg style="left:8.70px;top:912.70px" width="18.40" height="18.40" viewBox="0 0 20 20" fill="none" stroke-width="1.2"><path d="M2.300 3h8.500c3.300 0 6 1.500 7 4.300-2-1.100-3.600-1.400-5.200-1.100v.8H2.300Z" stroke="#ced0d6" stroke-width="1.45" stroke-linecap="round" stroke-linejoin="round"/><path d="M7.700 7.200 7.200 18h4.100L10.800 7.200" stroke="#ced0d6" stroke-width="1.45" stroke-linecap="round" stroke-linejoin="round"/></svg>
<svg style="left:8.90px;top:948.50px" width="18.40" height="18.40" viewBox="0 0 20 20" fill="none" stroke-width="1.2"><path d="M5.600 2.800h8.800L18.800 8 10 18 1.200 8Z" stroke="#ced0d6" stroke-width="1.45" stroke-linecap="round" stroke-linejoin="round"/><path d="M1.500 8h17M7.300 3 5.800 8 10 17.500 14.200 8 12.700 3" stroke="#ced0d6" stroke-width="1.45" stroke-linecap="round" stroke-linejoin="round" stroke-width="1.200"/></svg>
<div class="a" style="left:4.10px;top:981.70px;width:27.80px;height:28.00px;background:#3f72e8;border-radius:6px"></div>
<svg style="left:9.10px;top:986.70px" width="18.40" height="18.40" viewBox="0 0 20 20" fill="none" stroke-width="1.2"><path d="M6.800 14.800V3.700L9.800 6.400h4.900L17.700 3.700V14.800C17.700 15.600 17.100 16.200 16.300 16.200H8.200C7.400 16.200 6.800 15.600 6.800 14.800Z" stroke="#ffffff" stroke-width="1.450" stroke-linecap="round" stroke-linejoin="round"/><path d="M1.800 6.500h3M1.800 10h3M1.800 13.500h3" stroke="#ffffff" stroke-width="1.450" stroke-linecap="round" stroke-linejoin="round"/><circle cx="10.100" cy="9.800" r="1" fill="#fff"/><circle cx="14.400" cy="9.800" r="1" fill="#fff"/><path d="M11.300 12.300h1.900l-.95 1.200Z" fill="#fff" stroke="#fff" stroke-width=".6" stroke-linejoin="round"/></svg>
<svg style="left:9.00px;top:1023.20px" width="18.40" height="18.40" viewBox="0 0 20 20" fill="none" stroke-width="1.2"><circle cx="10" cy="10" r="8.300" stroke="#ced0d6" stroke-width="1.45" stroke-linecap="round" stroke-linejoin="round"/><path d="M10 5.300v6" stroke="#ced0d6" stroke-width="1.45" stroke-linecap="round" stroke-linejoin="round" stroke-width="1.700"/><circle cx="10" cy="14.300" r="1.100" fill="#ced0d6"/></svg>
<svg style="left:9.00px;top:1060.20px" width="18.40" height="18.40" viewBox="0 0 20 20" fill="none" stroke-width="1.2"><rect x="1.700" y="2.700" width="16.600" height="14.600" rx="1.600" stroke="#ced0d6" stroke-width="1.45" stroke-linecap="round" stroke-linejoin="round"/><path d="M5.200 6.700 8.500 9.800 5.200 12.900M10 13.200h4.300" stroke="#ced0d6" stroke-width="1.45" stroke-linecap="round" stroke-linejoin="round"/></svg>
<svg style="left:8.60px;top:1097.10px" width="18.40" height="18.40" viewBox="0 0 20 20" fill="none" stroke-width="1.2"><circle cx="5.300" cy="4.300" r="2.500" stroke="#ced0d6" stroke-width="1.45" stroke-linecap="round" stroke-linejoin="round"/><circle cx="14.800" cy="6.500" r="2.500" stroke="#ced0d6" stroke-width="1.45" stroke-linecap="round" stroke-linejoin="round"/><path d="M5.300 6.800V18M14.800 9C14.800 12.300 11.500 13 5.500 13.300" stroke="#ced0d6" stroke-width="1.45" stroke-linecap="round" stroke-linejoin="round"/></svg>
<svg style="left:60.44px;top:799.44px" width="14.72" height="14.72" viewBox="0 0 16 16" fill="none" stroke-width="1.2"><rect x="4.300" y="1.800" width="7.600" height="12.400" rx="1.200" stroke="#ced0d6"/><path d="M6.800 3.800h2.600" stroke="#ced0d6" stroke-linecap="round"/></svg>
<svg style="left:426.14px;top:799.14px" width="14.72" height="14.72" viewBox="0 0 16 16" fill="none" stroke-width="1.2"><path d="M1.800 2.500h10.400L8.300 7.800v5.700L5.700 12V7.800Z" stroke="#ced0d6" stroke-width="1.15" stroke-linecap="round" stroke-linejoin="round"/><path d="M12 9.500h3.500" stroke="#ced0d6" stroke-width="1.15" stroke-linecap="round" stroke-linejoin="round"/></svg>
<svg style="left:1759.64px;top:799.14px" width="14.72" height="14.72" viewBox="0 0 16 16" fill="none" stroke-width="1.2"><path d="M4.600 4.600 11.400 11.400M11.400 4.600 4.600 11.400" stroke="#868a91" stroke-width="1.050" stroke-linecap="round"/></svg>
<svg style="left:1808.64px;top:798.94px" width="14.72" height="14.72" viewBox="0 0 16 16" fill="none" stroke-width="1.2"><path d="M8 1.800 9.900 5.900 14.400 6.400 11.100 9.500 12 13.900 8 11.700 4 13.900 4.900 9.500 1.600 6.400 6.100 5.900Z" stroke="#ced0d6" stroke-width="1.15" stroke-linecap="round" stroke-linejoin="round"/></svg>
<svg style="left:1837.30px;top:798.30px" width="16.00" height="16.00" viewBox="0 0 16 16" fill="none" stroke-width="1.2"><circle cx="8" cy="8" r="6.500" stroke="#6f737a" stroke-width="1.050"/><path d="M6.100 6.300C6.200 5.200 7 4.500 8.100 4.500S10 5.200 10 6.200C10 7.700 8 7.700 8 9.400" stroke="#6f737a" stroke-width="1.100" stroke-linecap="round"/><circle cx="8" cy="11.500" r=".75" fill="#6f737a"/></svg>
<div class="t " style="left:23.50px;top:1128.60px;font-size:13px;letter-spacing:0.079px;color:#a9adb5">qnn-hardware-acceleration-train</div>
<div class="t " style="left:243.80px;top:1128.60px;font-size:13px;letter-spacing:0.066px;color:#a9adb5">app</div>
<div class="t " style="left:287.90px;top:1128.60px;font-size:13px;letter-spacing:0.185px;color:#a9adb5">src</div>
<div class="t " style="left:338.60px;top:1128.60px;font-size:13px;letter-spacing:-0.072px;color:#a9adb5">main</div>
<div class="t " style="left:388.30px;top:1128.60px;font-size:13px;letter-spacing:0.377px;color:#a9adb5">cpp</div>
<div class="t " style="left:451.20px;top:1128.60px;font-size:13px;letter-spacing:0.011px;color:#a9adb5">CMakeLists.txt</div>
<svg style="left:213.64px;top:1131.54px" width="14.72" height="14.72" viewBox="0 0 16 16" fill="none" stroke-width="1.2"><path d="M6.4 4.7 9.7 8l-3.3 3.3" stroke="#9da0a8" stroke-linecap="round" stroke-linejoin="round" stroke-width="1.05"/></svg>
<svg style="left:270.64px;top:1131.54px" width="14.72" height="14.72" viewBox="0 0 16 16" fill="none" stroke-width="1.2"><path d="M6.4 4.7 9.7 8l-3.3 3.3" stroke="#9da0a8" stroke-linecap="round" stroke-linejoin="round" stroke-width="1.05"/></svg>
<svg style="left:308.64px;top:1131.54px" width="14.72" height="14.72" viewBox="0 0 16 16" fill="none" stroke-width="1.2"><path d="M6.4 4.7 9.7 8l-3.3 3.3" stroke="#9da0a8" stroke-linecap="round" stroke-linejoin="round" stroke-width="1.05"/></svg>
<svg style="left:370.64px;top:1131.54px" width="14.72" height="14.72" viewBox="0 0 16 16" fill="none" stroke-width="1.2"><path d="M6.4 4.7 9.7 8l-3.3 3.3" stroke="#9da0a8" stroke-linecap="round" stroke-linejoin="round" stroke-width="1.05"/></svg>
<svg style="left:414.64px;top:1131.54px" width="14.72" height="14.72" viewBox="0 0 16 16" fill="none" stroke-width="1.2"><path d="M6.4 4.7 9.7 8l-3.3 3.3" stroke="#9da0a8" stroke-linecap="round" stroke-linejoin="round" stroke-width="1.05"/></svg>
<div class="t " style="left:1479.00px;top:1128.60px;font-size:13px;letter-spacing:-0.117px;color:#a9adb5">28:37 (42 chars, 1 line break)</div>
<div class="t " style="left:1658.60px;top:1128.60px;font-size:13px;letter-spacing:-0.286px;color:#a9adb5">LF</div>
<div class="t " style="left:1687.60px;top:1128.60px;font-size:13px;letter-spacing:0.031px;color:#a9adb5">UTF-8</div>
<div class="t " style="left:1798.20px;top:1128.60px;font-size:13px;letter-spacing:-0.043px;color:#a9adb5">4 spaces</div>
<svg style="left:8.84px;top:1131.64px" width="14.72" height="14.72" viewBox="0 0 16 16" fill="none" stroke-width="1.2"><rect x="4.400" y="4.400" width="7.200" height="7.200" rx="1.900" stroke="#548af7" stroke-width="1.450"/></svg>
<svg style="left:229.24px;top:1131.64px" width="14.72" height="14.72" viewBox="0 0 16 16" fill="none" stroke-width="1.2"><rect x="4.400" y="4.400" width="7.200" height="7.200" rx="1.900" stroke="#548af7" stroke-width="1.450"/></svg>
<svg style="left:324.24px;top:1131.64px" width="14.72" height="14.72" viewBox="0 0 16 16" fill="none" stroke-width="1.2"><rect x="4.400" y="4.400" width="7.200" height="7.200" rx="1.900" stroke="#548af7" stroke-width="1.450"/></svg>
<svg style="left:433.75px;top:1131.85px" width="13.50" height="13.50" viewBox="0 0 16 16" fill="none" stroke-width="1.2"><path d="M8 0.900 0.900 15.100 7.300 9.400Z" fill="#3f6fd9"/><path d="M8 0.900 15.100 15.100 8.700 11.700 9 7Z" fill="#e04d4d"/><path d="M0.900 15.100 15.100 15.100 8.200 11.400 6.400 10.200Z" fill="#3fae45"/><path d="M8 4.500 8.900 10.800 6.500 9.700Z" fill="#d8dadf"/></svg>
<svg style="left:1739.44px;top:1131.44px" width="14.72" height="14.72" viewBox="0 0 16 16" fill="none" stroke-width="1.2"><path d="M1.700 2.500h12.600v9.300H13.300V14.300L10.300 11.800H1.700Z" stroke="#b4b8bf" stroke-width="1.150" stroke-linejoin="round"/><path d="M8 4.800v3.300" stroke="#b4b8bf" stroke-width="1.300" stroke-linecap="round"/><circle cx="8" cy="9.800" r=".8" fill="#b4b8bf"/></svg>
<svg style="left:1769.20px;top:1131.80px" width="14.00" height="14.00" viewBox="0 0 20 20" fill="none" stroke-width="1.2"><path d="M10 1.500C10.600 6.500 13.500 9.400 18.500 10 13.500 10.600 10.600 13.500 10 18.500 9.400 13.500 6.500 10.600 1.500 10 6.500 9.400 9.400 6.500 10 1.500Z" fill="#dfe1e5"/></svg>
<svg style="left:1866.44px;top:1130.94px" width="14.72" height="14.72" viewBox="0 0 16 16" fill="none" stroke-width="1.2"><rect x="2.500" y="7.300" width="9" height="6.700" rx="1.300" stroke="#b4b8bf" stroke-width="1.150"/><path d="M9.500 7.200V5.200C9.500 3.600 10.600 2.500 12 2.500s2.500 1.100 2.500 2.700" stroke="#b4b8bf" stroke-width="1.150" stroke-linecap="round"/><circle cx="7" cy="10.600" r="1" fill="#b4b8bf"/></svg>
<div id="rim"></div></div></body></html>
